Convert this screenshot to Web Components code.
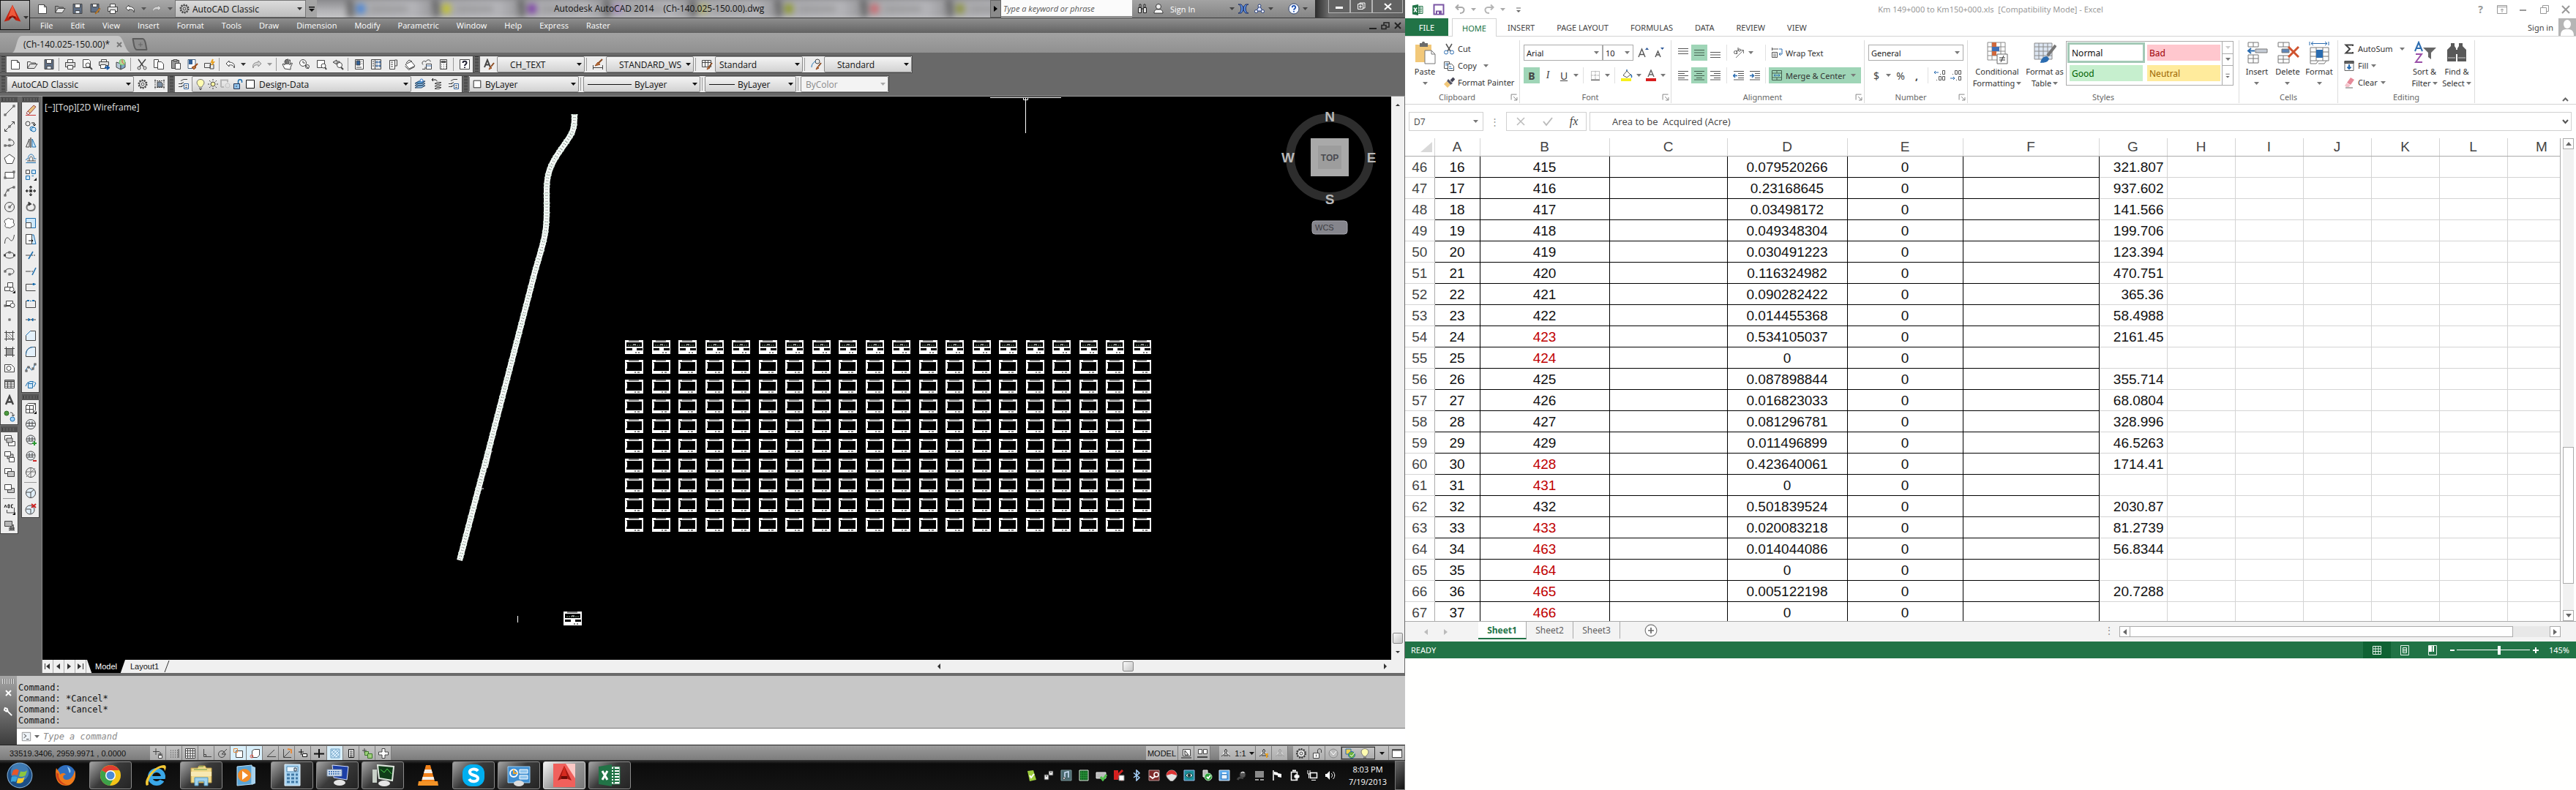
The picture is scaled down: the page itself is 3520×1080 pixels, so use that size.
<!DOCTYPE html>
<html lang="en">
<head>
<meta charset="utf-8">
<title>Workspace</title>
<style>
    html, body { height: 100%; }
    body {
        margin: 0;
        display: flex;
        overflow: hidden;
        background: #fffffe;
        font-family: "Open Sans", "Noto Sans", sans-serif;
        font-size: 11px;
    }
    cad-desktop { flex: 1920 1 0; min-width: 0; }
    excel-window { flex: 1600 1 0; min-width: 0; font-family: "Noto Sans", "Open Sans", sans-serif; }
</style>
</head>
<body>
<cad-desktop></cad-desktop>
<excel-window></excel-window>

<script>
// ---------------------------------------------------------------- icons
// 16x16 line icons, default stroke comes from the svg element
const B = 'stroke="#1d6fae"';
const BF = 'stroke="#1d6fae" fill="#cfe8fa"';
const DOT = (x, y) => `<rect x="${x - 1}" y="${y - 1}" width="2" height="2" fill="#fff"/>`;
const ICONS = {
    new: '<path d="M2.5 2.5h8l3 3v9h-11z" fill="#fff"/><path d="M10.500 2.500v3h3"/>',
    open: '<path d="M1.500 13V4.500h4l1 1.500h6v2"/><path d="M1.500 13.500l3.500-6h10l-4 6z" fill="#e3e3e3"/>',
    save: '<path d="M2 1.500h12v13H2z" fill="#5f6f86"/><path d="M4.500 1.500h7v5h-7z" fill="#fff"/><path d="M5 10.500h6v4H5z" fill="#dde5ee"/>',
    saveas: '<path d="M2 1.500h11v11H2z" fill="#5f6f86"/><path d="M4.500 1.500h6v4h-6z" fill="#fff"/><path d="M15 8l-5 6-2 1 1-2 5-6z" fill="#e9a13b" stroke="#a0621a"/>',
    print: '<path d="M4.500 5V1.500h7V5M2.500 11.500h-1v-6h13v6h-1" fill="#fff"/><path d="M1.500 5.500h13v6h-13z" fill="#ddd"/><path d="M4.500 9.500h7v5h-7z" fill="#fff"/>',
    preview: '<path d="M2.500 1.500h8l2 2v9h-10z" fill="#fff"/><circle cx="9" cy="9" r="3" fill="#fff"/><path d="M11 11l4 4" stroke-width="2"/>',
    publish: '<path d="M4.500 4V1.500h7V4"/><path d="M1.500 4.500h13v5h-13z" fill="#ddd"/><path d="M3.500 8.500h7v5h-7z" fill="#fff"/><path d="M9 12.500h5M12 10l3 2.500-3 2.500" stroke="#1558a8" stroke-width="2"/>',
    dwf: '<path d="M2 5l6 2v8l-6-3z" fill="#b7c9d8"/><path d="M8 7l6-2v7l-6 3z" fill="#7ea7c7"/><circle cx="10" cy="5" r="4" fill="#b8d693" stroke="#6c7"/><path d="M10 1v4l3 3" stroke="#d55"/>',
    cut: '<path d="M3 1l7 10M13 1L5 11" stroke-width="1.500"/><circle cx="4" cy="13" r="2"/><circle cx="12" cy="13" r="2"/>',
    copy: '<path d="M1.500 1.500h6v11h-6z" fill="#fff"/><path d="M6.500 4.500h5l3 3v7h-8z" fill="#fff"/>',
    paste: '<path d="M2.500 2.500h10v11h-10z" fill="#999"/><path d="M5 1.500h5v2H5z" fill="#ccc"/><path d="M7.500 6.500h7v8h-7z" fill="#fff"/>',
    match: '<path d="M2 1.500h10v12H2z" fill="#fff" stroke="#46607c"/><path d="M3 2h5v6H3z" fill="#2f5f98" stroke="none"/><path d="M15 7l-4 4" stroke="#9a4b1c" stroke-width="2"/><path d="M7 12l4-2 2 2-3 3z" fill="#b5713c" stroke="#9a4b1c"/>',
    blockedit: '<path d="M1.500 6.500h8v6h-8z"/><path d="M9 8h5v6H9z"/><path d="M13 1l-2 4h3l-3 4" stroke="#e8a020" stroke-width="2"/>',
    undo: '<path d="M6 3L2 7l4 4V9c4-1 7 1 7 4 2-5-2-8-7-8z" fill="#fff"/>',
    redo: '<path d="M10 3l4 4-4 4V9c-4-1-7 1-7 4C1 8 5 5 10 5z" stroke="#8d8d8d" fill="#d5d5d5"/>',
    pan: '<path d="M4 14L1 8l1-1 2 2V3h1.500v5V1.500H7V8l.5-7H9v7l1-6h1.500L11 9l2-3 1.500.5L12 12v3z" fill="#fff"/>',
    zoomrt: '<circle cx="6" cy="6" r="4.500" fill="#fff"/><path d="M6 3v3h3M9 9l5 5" /><circle cx="12" cy="11" r="2.500"/>',
    zoomwin: '<path d="M2.500 2.500h10v10h-10z" fill="#fff" /><circle cx="11" cy="10" r="3" fill="#fff"/><path d="M13 12l2 3" stroke-width="2"/>',
    zoomprev: '<path d="M6 2L1 5l5 3V6h4V4H6z" fill="#ccc"/><circle cx="10" cy="9" r="3.500" fill="#fff"/><path d="M12 12l3 3" stroke-width="2"/>',
    props: '<path d="M2.500 1.500h11v13h-11z" fill="#fff"/><path d="M4 3h5v6H4z" fill="#2f5f98"/><path d="M11 4h1M11 7h1M4 12h7"/>',
    dcenter: '<path d="M1.500 1.500h13v13h-13zM6.500 1.500v13"/><path d="M3 4h2M3 7h2M3 10h2"/><path d="M8 4h2v2H8zM12 4h2v2h-2zM8 9h2v2H8zM12 9h2v2h-2z" stroke="#2f5f98"/>',
    palettes: '<path d="M3.500 2.500h7v12h-7z" fill="#fff"/><path d="M10.500 2h3v8h-3M5 5h3M5 8h3M5 11h3"/>',
    sheetset: '<path d="M2 8l8-4 5 6-8 4z" fill="#fff"/><path d="M1.500 10.500l5 5 8-4M3 6l4-4 4 2" />',
    markup: '<path d="M3 8.500c-3-3 1-7 4-4 1-4 7-3 6 0"/><path d="M7.500 7.500h7v7h-7z" fill="#fff"/><path d="M7 10h8" stroke="#2f5f98"/><path d="M2 14.500h4v-3"/>',
    calc: '<path d="M3.500 1.500h9v13h-9z" fill="#fff"/><path d="M5 3.500h6v2H5z" fill="#777"/><path d="M5 8h1m2 0h1m2 0h1M5 10.500h1m2 0h1m2 0h1M5 13h1m2 0h1m2 0h1"/>',
    help: '<path d="M1.500 1.500h13v13h-13z" fill="#fff"/><path d="M5.500 6c0-3 5-3 5 0 0 2-2.500 2-2.500 4M8 11.500v1.500" stroke="#223" stroke-width="2"/>',
    gear: '<circle cx="8" cy="8" r="5.500" stroke-dasharray="2 1.400" stroke-width="2"/><circle cx="8" cy="8" r="4.500"/><circle cx="8" cy="8" r="2"/>',
    wssave: '<path d="M2 1.500v13M14 1.500v13M1 3.500h14M1 12.500h14" stroke-dasharray="2 1"/><path d="M5 5h5l2 2v5H5z" fill="#7d8fa3"/>',
    textstyle: '<path d="M2 12L6 2l4 10M3.500 8.500h5" stroke-width="2"/><path d="M15 6l-4 5" stroke="#8a4a20" stroke-width="2"/><path d="M8 15l2-4 2 2z" fill="#b5713c" stroke="#9a4b1c"/>',
    dimstyle: '<path d="M1.500 9v6M14.500 9v6M2 12.500h12"/><path d="M14 1L9 6" stroke="#8a4a20" stroke-width="2"/><path d="M4 10l4-5 3 3z" fill="#b5713c" stroke="#9a4b1c"/>',
    tablestyle: '<path d="M1.500 2.500h12v9h-12z" fill="#fff"/><path d="M1.500 5.500h12M5.500 3v8M9.500 3v8"/><path d="M15 6l-4 5" stroke="#8a4a20" stroke-width="2"/><path d="M8 15l2-4 2 2z" fill="#b5713c" stroke="#9a4b1c"/>',
    mleader: '<circle cx="10" cy="4" r="3"/><path d="M2 12c0-5 4-8 6-8" stroke="#1d6fae"/><path d="M15 6l-4 5" stroke="#8a4a20" stroke-width="2"/><path d="M8 15l2-4 2 2z" fill="#b5713c" stroke="#9a4b1c"/>',
    layers: '<path d="M4 3.500l4-2h5M4 7.500l4-2M4 11.500l4-2M1 7.500h5M1 11.500h5"/><path d="M8.500 7.500h6v7h-6z" fill="#fff" stroke="#2f5f98"/><path d="M10 10h3M10 12.500h3"/>',
    bulb: '<path d="M6 12c0-2-3-3-3-6 0-6 10-6 10 0 0 3-3 4-3 6z" fill="#fffbb0" stroke="#777"/><path d="M6 14h4M7 15.500h2"/>',
    sun: '<circle cx="8" cy="8" r="3" fill="#fff3a0"/><path d="M8 1v2M8 13v2M1 8h2M13 8h2M3 3l1.500 1.500M11.500 11.500L13 13M3 13l1.500-1.500M11.500 4.500L13 3"/>',
    vpfreeze: '<path d="M2 12V2.500h9v3M2 12h4" stroke="#b5b5b5" stroke-width="2"/><circle cx="11" cy="10" r="3" stroke="#c5c5c5"/>',
    lockopen: '<path d="M2.500 7.500h8v7h-8z" fill="#8fc1ea" stroke="#235"/><path d="M8.500 7V4c0-3 5-3 5 0v2" stroke="#1d6fae" stroke-width="1.500"/><path d="M6 10v2"/>',
    swatch: '<path d="M2.500 2.500h11v11h-11z" fill="#fff" stroke="#111"/>',
    layerset: '<path d="M1 13l5-3h9l-5 3zM1 10l5-3h9l-5 3z" fill="#9ecbf0" stroke="#246"/><path d="M1 7l5-3h9l-5 3z" fill="#5fa8e0" stroke="#246"/><circle cx="10" cy="3" r="2" fill="#fff" stroke="#37c"/>',
    layerprev: '<path d="M5 7.500l3-2h6l-3 2zM5 11l3-2h6l-3 2zM5 14.500l3-2h6l-3 2z" fill="#fff"/><path d="M1 2h4c2 0 3 1 3 2M3 0L1 2l2 2" stroke="#111"/>',
    // draw palette
    line: `<path d="M2 14L14 2"/>${DOT(2, 14)}${DOT(14, 2)}`,
    xline: `<path d="M1.500 14.500l13-13M11 1.500h3.500V5M1.500 11v3.500H5"/>${DOT(8, 8)}`,
    pline: `<path d="M2 12h8c6 0 5-7 0-8"/>${DOT(2, 12)}${DOT(8, 12)}${DOT(8, 4)}`,
    polygon: '<path d="M8 2l7 5-3 7.500H4L1 7z" fill="#fff"/>',
    rect: `<path d="M2 4.500h12v8H2z" fill="#fff"/>${DOT(2, 12)}${DOT(14, 4)}`,
    arc: `<path d="M2 14C3 8 7 4 14 3"/>${DOT(2, 14)}${DOT(6, 7)}${DOT(14, 3)}`,
    circle: `<circle cx="8" cy="8" r="6.500"/><path d="M8 8l4-4"/>${DOT(8, 8)}`,
    revcloud: '<path d="M4 3c2-3 5-1 5 0 3-2 6 1 4 4 3 3 1 6-2 6-1 2-4 2-5 1-4 1-5-3-3-5-3-2-2-6 1-6z" fill="#fff"/>',
    spline: '<path d="M1.500 14C2 4 6 5 8 8s5 4 6.500-6"/>',
    ellipse: `<ellipse cx="8" cy="8" rx="6.500" ry="4"/>${DOT(8, 4)}${DOT(1.5, 8)}${DOT(14.5, 8)}`,
    ellarc: `<path d="M2 8c1-5 12-5 12 0 0 3-3 4-6 4"/>${DOT(2, 8)}${DOT(8, 12)}`,
    insblock: '<path d="M5.500 1.500h7v6h-7z" fill="#fff"/><path d="M1.500 7.500h8v5h-8z" fill="#fff"/><circle cx="11" cy="10.500" r="3" fill="#fff"/><path d="M16 12v4h-4z" fill="#111" stroke="none"/>',
    mkblock: `<path d="M3.500 4.500h9v6h-9z" fill="#fff"/><circle cx="12" cy="10.500" r="3" fill="#fff"/><path d="M1 11.500h9"/>${DOT(2, 11)}`,
    point: DOT(8, 8),
    hatch: '<path d="M3.500 1v14M12.500 1v14M1 3.500h14M1 12.500h14"/><path d="M4 5l7 7M4 8l4 4M7 4l5 5" stroke="#888"/>',
    gradient: '<path d="M4 4h8v8H4z" fill="#999" stroke="none"/><path d="M3.500 1v14M12.500 1v14M1 3.500h14M1 12.500h14"/>',
    region: '<path d="M1.500 3.500h9l4 4v6h-13z" fill="#fff"/><circle cx="7" cy="8.500" r="3"/>',
    table: '<path d="M1.500 2.500h13v11h-13z" fill="#fff"/><path d="M1.500 4.500h13" stroke-width="2"/><path d="M1.500 8h13M1.500 11h13M5.500 4v9M10 4v9"/>',
    mtext: '<path d="M3 14L8 2.500 13 14M4.500 10.500h7" stroke-width="2.400"/>',
    addsel: '<circle cx="4" cy="4" r="3" fill="#4c9a3f" stroke="#2c6a22"/><circle cx="12" cy="12" r="3" fill="#9fd3ff" stroke="#1d6fae"/><path d="M9 3c3 0 4 1 4 4M11 6l2 2 2-2"/>',
    dofront: '<path d="M1.500 1.500h9v6h-9zM6.500 9.500h9v6h-9z" fill="#fff"/><path d="M4 5h8v6H4z" fill="#c4c4c4"/>',
    doback: '<path d="M5 5h8v6H5z" fill="#c4c4c4"/><path d="M1.500 1.500h8v6h-8zM7.500 9.500h7v6h-7z" fill="#fff"/>',
    doabove: '<path d="M1.500 2.500h9v7h-9z" fill="#fff"/><path d="M5.500 6.500h9v7h-9z" fill="#c4c4c4"/>',
    dounder: '<path d="M5.500 7.500h9v6h-9z" fill="#c4c4c4"/><path d="M1.500 2.500h9v7h-9z" fill="#fff"/>',
    abc: '<path d="M4.500 9v4h10V6"/><path d="M1 6l1.500-4L4 6M6 2v4h2V2zM13 2h-2.500v4H13" stroke="#111"/><path d="M16 12v4h-4z" fill="#111" stroke="none"/>',
    hatchback: '<path d="M1.500 2.500h10v7h-10z" fill="#b6b6b6"/><path d="M7 12h8M7 14.500h8M10 9v6M13 7v8" stroke-width="1.500"/>',
    // modify palette
    erase: '<path d="M1 14.500h14" stroke="#c33"/><path d="M4 9l8-8 3 2-8 9z" fill="#e8c37e" stroke="#944"/><path d="M4 9l3 3-2 1.500L2 12z" fill="#fff" stroke="#944"/>',
    copyobj: `<circle cx="4" cy="4" r="3"/><path d="M9 3h4v3M11 5l2 2 2-2" stroke="#111"/><circle cx="10" cy="11" r="3" ${BF}/><circle cx="12" cy="12" r="3" ${BF}/>`,
    mirror: `<path d="M6 3v11H1.500z"/><path d="M8 1v14" stroke="#111"/><path d="M10 3v11h5z" ${BF}/>`,
    offset: `<path d="M1.500 13.500H15M1.500 10c0-2 2-2 3-2 0-8 8-8 8 0h3" ${B}/><path d="M3 11h12M6 11c0-8 5-8 5 0"/>`,
    array: `<path d="M1.500 1.500h5v5h-5z"/><path d="M9.500 1.500h5v5h-5zM1.500 9.500h5v5h-5zM9.500 9.500H12" ${BF}/><path d="M16 12v4h-4z" fill="#111" stroke="none"/>`,
    move: '<path d="M8 1v4M8 11v4M1 8h4M11 8h4" stroke-width="1.500"/><path d="M6 3l2-2 2 2zM6 13l2 2 2-2zM3 6L1 8l2 2zM13 6l2 2-2 2zM6.500 6.500h3v3h-3z" fill="#333"/>',
    rotate: '<path d="M11 4c4 2 4 9-3 9S1 6 6 4" stroke="#777" stroke-width="2"/><path d="M5 1l4 3-4 2z" fill="#333"/>',
    scale: `<path d="M1.500 1.500h13v13h-13z" ${BF}/><path d="M1.500 7.500h7v7h-7z" fill="#fff"/>`,
    stretch: `<path d="M8 2h4l3 12.500H8z" ${BF}/><path d="M1.500 1.500h8v13h-8z" fill="#fff"/><path d="M5 10h6M9 8l2 2-2 2" stroke="#111"/>`,
    trim: `<path d="M5 13L11 3" ${B} stroke-width="1.500"/><path d="M1 8h6"/><path d="M9 8h6" stroke-dasharray="2 1"/>`,
    extend: `<path d="M10 13l5-10" ${B} stroke-width="1.500"/><path d="M1 8h5"/><path d="M6 8h6" stroke-dasharray="2 1"/>`,
    breakpt: `<path d="M10 3.500H1.500v9h13"/><path d="M10 3.500h5" ${B}/><path d="M11 2.500h2v2h-2z" ${B}/>`,
    break: `<path d="M4 4.500H1.500v9h13v-9H12"/><path d="M4 4.500h8" ${B} stroke-dasharray="2 1"/><path d="M3 3h3v2H3zM10 3h3v2h-3z" fill="#1d6fae" stroke="none"/>`,
    join: `<path d="M1 8h14"/><path d="M5 6l2 2-2 2zM11 6L9 8l2 2z" fill="#1d6fae" ${B}/>`,
    chamfer: `<path d="M1.500 14.500v-7l6-6h7v13z" fill="#e4f1fb"/><path d="M1.500 7.500l6-6" ${B}/>`,
    fillet: `<path d="M1.500 14.500v-3c0-6 4-10 10-10h3v13z" fill="#e4f1fb"/><path d="M1.500 11.500c0-6 4-10 10-10" ${B}/>`,
    blend: `<path d="M1.500 12c1-6 4-7 6-3s4 2 6-7" ${B}/>${DOT(2, 12)}${DOT(5, 7)}${DOT(11, 9)}${DOT(14, 3)}`,
    explode: `<path d="M4.500 7.500h6v6h-6zM4.500 7.500l2-3h5l-1 3M1 11l2-4 2-2M12 12l3-5-2-2" ${BF}/>`,
    box: '<path d="M1.500 4.500l3-3h10v9l-3 4h-10z" fill="#fff"/><path d="M1.500 4.500h10v10M11.500 4.500l3-3M6.500 4.500v10M1.500 9.500h10"/><path d="M16 12v4h-4z" fill="#111" stroke="none"/>',
    solid: '<circle cx="8" cy="8" r="6.500" fill="#e9eef2"/><path d="M2 6.500h12M3 10.500h10M6 4v6M10 4v6"/>',
    union: '<circle cx="8" cy="7" r="6" fill="#e9eef2"/><path d="M2 6h12M3 9h9M6 3v6M10 3v6"/><path d="M13 9v6M10 12h6" stroke="#2d9a34" stroke-width="2"/>',
    subtract: '<circle cx="8" cy="7" r="6" fill="#e9eef2"/><path d="M2 6h12M3 9h9M6 3v6M10 3v6"/><path d="M11 14h5" stroke="#c22" stroke-width="2"/>',
    inter: '<circle cx="8" cy="8" r="6.500"/><path d="M2 14L14 2M2 7h12M8 2v12" stroke="#777"/>',
    cubeview: '<circle cx="8" cy="8" r="6.500" fill="#e0eef8"/><path d="M8 14V7l5-4M8 7H2"/>',
    cubedel: '<circle cx="7" cy="9" r="6" fill="#e0eef8"/><path d="M8 14V8H2"/><path d="M9 1l6 5M15 1L9 6" stroke="#c22" stroke-width="2"/>',
    // status bar
    infer: '<path d="M5 1v9M1 5.500h9M8 9h6M11 6v8"/><path d="M8.500 10.500h5v4h-5z" fill="#fff"/>',
    snap: '<path d="M3 4h10M3 7h10M3 10h10M3 13h10" stroke-dasharray="1 2"/><path d="M14 2v12"/>',
    grid: '<path d="M1.500 1.500h13v13h-13z" fill="#fff"/><path d="M4.500 1v14M8 1v14M11.500 1v14M1 4.500h14M1 8h14M1 11.500h14"/>',
    ortho: '<path d="M4.500 2v10.500H15M4.500 9.500h3v3"/>',
    polar: '<circle cx="7" cy="9" r="4.500"/><path d="M7 9l7-7M7 9h6"/>',
    osnap: '<path d="M4.500 4.500h9v9h-9z" fill="#fff"/><path d="M1.500 1.500h5v5h-5z" stroke="#e58a3c"/>',
    osnap3: '<path d="M4.500 4.500l3-2h7v8l-3 3h-7z" fill="#fff"/><circle cx="4" cy="12" r="2" stroke="#e54"/>',
    otrack: '<path d="M13 3L3 12.500h12"/>',
    ducs: '<path d="M3.500 2v11.500H14M4 13l8-8"/><path d="M9 2l5 1v5" stroke="#e58a3c" stroke-width="2"/>',
    dyn: '<path d="M5.500 2v8M2 6h7" stroke="#111"/><path d="M7.500 8.500h6v4h-6z" fill="#fff" stroke="#111"/>',
    lwt: '<path d="M8 2v12M1 8.500h14" stroke="#111" stroke-width="2"/>',
    tpy: '<path d="M2 2h12v12H2z" fill="#d6ecfb" stroke="#6b9ec2"/><path d="M2 6l4-4M2 10l8-8M2 14L14 2M6 14l8-8M10 14l4-4M2 2l12 12M8 2l6 6M2 8l6 6" stroke="#8ab6d4"/>',
    qp: '<path d="M4.500 2.500h7v11h-7z" fill="#fff" stroke="#111"/><path d="M6 5h4M6 7.500h4M6 10h4M6 12h4" stroke="#111"/>',
    sc: '<path d="M4 1v6M1 4h6"/><path d="M4.500 5.500h5v5h-5z" fill="#9fcf7c" stroke="#3c7a26"/><path d="M8.500 8.500h6v6h-6z" fill="#9fcf7c" stroke="#3c7a26"/>',
    am: '<path d="M6 1.500h4V6h4.500v4H10v4.500H6V10H1.500V6H6z" fill="#fff"/>',
    modelsp: '<path d="M3.500 2.500h10v9h-10z" fill="#fff"/><path d="M6 4l5 6H6zM1 14h14" stroke="#222"/>',
    layoutsp: '<path d="M2.500 2.500h5v6h-5zM9.500 2.500h5v6h-5z" fill="#fff"/><path d="M1 13h14" stroke-width="2"/>',
    anno: '<path d="M8 2l1.500 2L9 8l5 4M8 2L6.500 4 7 8l-5 4M5 11h6" stroke="#333" fill="#fff"/>',
    annoauto: '<path d="M8 2l1.500 2L9 8l5 4M8 2L6.500 4 7 8l-5 4M5 11h6" stroke="#333" fill="#fff"/><path d="M12 8v6M10 9h4" stroke="#e8a020" stroke-width="2"/>',
    annogray: '<path d="M8 2l1.500 2L9 8l5 4M8 2L6.500 4 7 8l-5 4M5 11h6" stroke="#999" fill="#ddd"/>',
    geardark: '<circle cx="8" cy="8" r="6" stroke="#333" stroke-dasharray="2 1.400" stroke-width="2"/><circle cx="8" cy="8" r="5" fill="#ececec"/><circle cx="8" cy="8" r="2"/>',
    unlock: '<path d="M2.500 7.500h8v7h-8z" fill="#fff"/><path d="M8.500 7V4c0-3 5-3 5 0v3"/><path d="M6.500 9.500v3" />',
    perf: '<circle cx="8" cy="8" r="6" fill="#bbb" stroke="#888"/><path d="M4 5l4 5 4-5" stroke="#fff"/>',
    tray1: '<path d="M2 2h7v7H2z" fill="#f0d24a" stroke="#2468b0"/><circle cx="10" cy="10" r="4.500" fill="#6cb33f" stroke="#2468b0"/><path d="M8 10l2 2 4-5" stroke="#fff"/>',
    clean: '<path d="M1.500 2.500h13v11h-13z" fill="#fff"/><path d="M1.500 3.500h13" stroke="#555" stroke-width="2"/>',
    // header
    binoc: '<path d="M4 2h2v4H4zM10 2h2v4h-2zM2.500 6.500h4v7h-4zM9.500 6.500h4v7h-4zM6.500 8h3" fill="#ddd" stroke="#222"/>',
    user: '<circle cx="8" cy="5" r="3.500" fill="#eee" stroke="#333"/><path d="M2 14c0-4 3-5 4-5h4c1 0 4 1 4 5z" fill="#fff" stroke="#333"/>',
    exchange: '<path d="M1 2c5 0 5 12 0 12h4c4-4 4-8 0-12zM15 2c-5 0-5 12 0 12h-4c-4-4-4-8 0-12z" fill="#5d8fe0" stroke="#1d2f66"/>',
    a360: '<path d="M8 3l4 8H4z" stroke="#223a7a" fill="#dfe7ff"/><circle cx="8" cy="4" r="2" fill="#fff" stroke="#223a7a"/><circle cx="3.500" cy="11.500" r="2" fill="#fff" stroke="#223a7a"/><circle cx="12.500" cy="11.500" r="2" fill="#fff" stroke="#223a7a"/>',
    qmark: '<circle cx="8" cy="8" r="7" fill="#f2f6ff" stroke="#34466e"/><path d="M5.800 6.200c0-3 4.400-3 4.400 0 0 1.800-2.200 1.800-2.200 3.500M8 11v1.500" stroke="#1c4fae" stroke-width="1.800"/>',
    wrench: '<path d="M5 5l8 8M3 2l-1 3 3 2 2-1-1-3z" stroke="#fff" stroke-width="2"/>',
    prompt: '<path d="M1.500 1.500h13v13h-13z" fill="#eef3f8" stroke="#8a8a8a"/><path d="M4 4l4 3-4 3M8 12h4" stroke="#333"/>',
    // excel
    xl: '<path d="M7 3.500h8v10H7z" fill="#fff" stroke="#217346"/><path d="M8 6h6M8 8.500h6M8 11h6M11 4v9" stroke="#217346"/><path d="M1 2.500L9 1v15l-8-1.500z" fill="#217346" stroke="none"/><path d="M3 5.500l4 6M7 5.500l-4 6" stroke="#fff" stroke-width="1.500"/>',
    xlsave: '<path d="M1.500 1.500h13v13h-13z" fill="#fff" stroke="#7a55a3" stroke-width="2"/><path d="M4 9.500h8v5H4z" fill="#7a55a3" stroke="none"/><path d="M6 11h2v3H6z" fill="#fff" stroke="none"/>',
    xlundo: '<path d="M3 5h7c5 0 5 8-2 8M6 1.500L2.500 5 6 8.500" stroke="#a9a9a9" stroke-width="2"/>',
    xlredo: '<path d="M13 5H6c-5 0-5 8 2 8M10 1.500L13.500 5 10 8.500" stroke="#b5b5b5" stroke-width="2"/>',
    qat: '<path d="M5 6h6" stroke="#666"/><path d="M5 9h6l-3 3z" fill="#666" stroke="none"/>',
    xcut: '<path d="M4 1l6 10M12 1L6 11" stroke="#555" stroke-width="1.500"/><circle cx="4" cy="12.500" r="2.500" stroke="#2b6cb0"/><circle cx="12" cy="12.500" r="2.500" stroke="#2b6cb0"/>',
    xcopy: '<path d="M1.500 2.500h7v9h-7z" fill="#fff" stroke="#555"/><path d="M6.500 5.500h5l3 3v6h-8z" fill="#fff" stroke="#555"/><path d="M3 5h4M3 7h3M8 9h3M8 11.500h5" stroke="#2b6cb0"/>',
    xpaint: '<path d="M15 2l-4 4" stroke="#445" stroke-width="4"/><path d="M7 3l6 6-3 2-5-5z" fill="#556" stroke="none"/><path d="M5 6l5 5-4 4-5-5z" fill="#f2c879" stroke="none"/>',
    xborder: '<path d="M2.500 2.500h11v11h-11zM8 2v12M2 8h12" stroke="#888" stroke-dasharray="1 1"/><path d="M2 14.500h12" stroke="#555"/>',
    xfill: '<path d="M3 8l5-6 5 5-5 4z" fill="#fff" stroke="#555"/><path d="M8 2V0M13 7c2 1 2 3 1 4" stroke="#2b6cb0" stroke-width="1.500"/><path d="M0 12h14v4H0z" fill="#f7f01c" stroke="none"/>',
    xfontcol: '<path d="M4 10l4-9 4 9M5.500 7h5" stroke="#666" stroke-width="1.500"/><path d="M1 12h14v4H1z" fill="#d81e1e" stroke="none"/>',
    abig: '<path d="M2 14L6.500 3 11 14M3.500 10.500h6" stroke="#555" stroke-width="1.400"/><path d="M11 4l2.500-3L16 4z" fill="#2b5797" stroke="none"/>',
    asmall: '<path d="M3 14l3.500-8 3.500 8M4 11h5" stroke="#555" stroke-width="1.400"/><path d="M10 1l2.500 3L15 1z" fill="#2b5797" stroke="none"/>',
    atop: '<path d="M1 2.500h14M1 6h14M1 9.500h14" stroke="#555"/>',
    amid: '<path d="M1 4.500h14M1 8h14M1 11.500h14" stroke="#44604f"/>',
    abot: '<path d="M1 7.500h14M1 11h14M1 14.500h14" stroke="#555"/>',
    aleft: '<path d="M1 2.500h14M1 5.500h9M1 8.500h14M1 11.500h9M1 14h14" stroke="#555"/>',
    acenter: '<path d="M1 2.500h14M4 5.500h8M1 8.500h14M4 11.500h8M1 14h14" stroke="#44604f"/>',
    aright: '<path d="M1 2.500h14M6 5.500h9M1 8.500h14M6 11.500h9M1 14h14" stroke="#555"/>',
    orient: '<path d="M4 15L14 5M10 4.500h4.500V9" stroke="#777"/><circle cx="3.500" cy="7.500" r="2" stroke="#555"/><path d="M5.500 5v5M7 1v5" stroke="#555"/><circle cx="9" cy="4.500" r="1.500" stroke="#555"/>',
    outdent: '<path d="M7 5.500h8M7 8.500h8M7 11.500h8M1 2.500h14M1 14h14" stroke="#555"/><path d="M6 8.500H1M3 6L.500 8.500 3 11" stroke="#2b6cb0" stroke-width="1.500"/>',
    indent: '<path d="M8 5.500h7M8 8.500h7M8 11.500h7M1 2.500h14M1 14h14" stroke="#555"/><path d="M1 8.500h5M4 6l2.500 2.500L4 11" stroke="#2b6cb0" stroke-width="1.500"/>',
    wrap: '<path d="M1.500 1v4M1 3h9M1.500 7.500h7v7h-7zM3 10h4M3 12.500h4" stroke="#555"/><path d="M11 3h4v7h-4M13 8l-2 2 2 2" stroke="#2b6cb0"/>',
    merge: '<path d="M1.500 1.500h13v13h-13zM1.500 5h13M1.500 11h13M8 1.500V5M8 11v3.500" stroke="#44604f"/><path d="M4 8h8M5.500 6.500L4 8l1.500 1.500M10.500 6.500L12 8l-1.500 1.500" stroke="#2b6cb0"/>',
    xsum: '<path d="M13 4V2.500H3.500L9 8l-5.500 5.500H13V12" stroke="#444" stroke-width="2"/>',
    xfilldown: '<path d="M2 1.500h12v13H2z" fill="#fff" stroke="#666"/><path d="M2 1.500h12v3H2z" fill="#666"/><path d="M8 6v6M5.500 9.500L8 12l2.500-2.500" stroke="#2b6cb0" stroke-width="2"/>',
    xclear: '<path d="M5 8l5-7 5 3-5 7z" fill="#e58a99" stroke="none"/><path d="M4.500 8.500l5 3-2 2.500H4l-2-2z" fill="#f4c3cb" stroke="none"/><path d="M3 15h10" stroke="#666"/>',
    xclose: '<path d="M3 3l10 10M13 3L3 13" stroke="#bbb" stroke-width="1.500"/>',
    xcheck: '<path d="M2 8l4 5 8-10" stroke="#bbb" stroke-width="2"/>',
    ribopts: '<path d="M1.500 2.500h13v11h-13zM1.500 4.500h13" stroke="#999"/><path d="M8 12V7M6 9l2-2 2 2" stroke="#999"/>',
    xmin: '<path d="M3 9h9" stroke="#999" stroke-width="2"/>',
    xrest: '<path d="M2.500 5.500h8v8h-8zM5.500 5V2.500h8v8H11" stroke="#999"/>',
    xquit: '<path d="M3 3l10 10M13 3L3 13" stroke="#999" stroke-width="2"/>',
    vnormal: '<path d="M2.500 2.500h11v11h-11zM2 6h12M2 9.500h12M6 2v12M10 2v12" stroke="#e5f2ea"/>',
    vlayout: '<path d="M2.500 1.500h11v13h-11zM5.500 4.500h5v7h-5zM6 7h4M6 9h4" stroke="#e5f2ea"/>',
    vbreak: '<path d="M2.500 1.500h11v13h-11z" stroke="#e5f2ea"/><path d="M3 2h4v8H3zM8 2h2v8H8z" fill="#fff" stroke="none"/>',
    addsheet: '<circle cx="8" cy="8" r="7" stroke="#777" fill="#fff"/><path d="M8 4.500v7M4.500 8h7" stroke="#666" stroke-width="1.500"/>',
    launcher: '<path d="M3.500 12V3.500H12M7 7l5 5M12.500 8v4.500H8" stroke="#777"/>',
    // tray
    t1: '<path d="M3 2l8-1 4 13-9 2z" fill="#9ccc3c" stroke="none"/><path d="M6 8l2 3 4-5" stroke="#fff" stroke-width="2"/>',
    t2: '<path d="M2 7h6v7H2zM8 2h6v6H8z" fill="#eee" stroke="#333"/><path d="M4 9h2M10 4h2" stroke="#222"/>',
    t3: '<path d="M1 1h14v14H1z" fill="#4a6a70" stroke="#7d979b"/><path d="M6 12V4l5-1v8" stroke="#d5e6ff" stroke-width="1.500"/><circle cx="5" cy="12" r="1.500" fill="#fff"/>',
    t4: '<path d="M2 1h12v14H2z" fill="#0c5a1c" stroke="#dfeee0"/><path d="M5 2v12M8 2v12M11 2v12M3 5h10M3 8h10M3 11h10" stroke="#2d9a3d"/>',
    t5: '<path d="M1 4h13v8H1z" fill="#bbb" stroke="#e8e8e8"/><path d="M7 10l3 4 5-7" stroke="#4fc04a" stroke-width="3"/>',
    t6: '<path d="M1 1h6v13H1z" fill="#d5201f" stroke="none"/><path d="M13 1L6 8l7 7" stroke="#d5201f" stroke-width="3"/><path d="M8 8h7v7H8z" fill="#fff" stroke="#888"/>',
    t7: '<path d="M4 4.500l8 6.500-4 4V1l4 4-8 6" stroke="#a8d4ff" stroke-width="1.500"/>',
    t8: '<path d="M1 1h14v14H1z" fill="#7d2a2a" stroke="#b99"/><circle cx="11" cy="7" r="3" stroke="#fff" stroke-width="1.500"/><path d="M2 9l4 3 4-3" stroke="#fff" stroke-width="2"/>',
    t9: '<path d="M8 1c5 0 7 4 7 7s-5 8-7 8-7-5-7-8 2-7 7-7z" fill="#e3e3e3" stroke="#aaa"/><path d="M8 1c5 0 7 4 7 7l-7-2-7 2c0-3 2-7 7-7z" fill="#d33" stroke="none"/>',
    t10: '<path d="M1 1h14v14H1z" fill="#1b8f9a" stroke="#9be"/><path d="M3 8c3-4 7-4 10 0-3 4-7 4-10 0z" fill="#e6fbfd" stroke="#033"/><circle cx="8" cy="8" r="2" fill="#033"/>',
    t11: '<path d="M3 1h6v9H3z" fill="#bbb" stroke="#eee"/><circle cx="10" cy="10" r="5" fill="#2da03a" stroke="#bfe8c2"/><path d="M8 10l2 2 3-4" stroke="#fff" stroke-width="2"/>',
    t12: '<path d="M1 1h14v14H1z" fill="#5aa9ec" stroke="#dcebfa"/><path d="M4 7h8v6H4z" fill="#e8f4ff" stroke="#2a6fb5"/><path d="M5 4h6v2H5z" fill="#fff" stroke="none"/>',
    t13: '<circle cx="9" cy="7" r="4" fill="#555" stroke="#333"/><path d="M7 5c1-2 4-2 4 0" stroke="#ddd" stroke-width="1.500"/><path d="M2 14c2-4 6-3 8-2" stroke="#444" stroke-width="3"/>',
    t14: '<path d="M2 2h12v9H2z" fill="#8a8a8a" stroke="none"/><path d="M2 14h5M9 14h5" stroke="#999" stroke-width="2"/>',
    t15: '<path d="M3 1v14" stroke="#fff" stroke-width="1.500"/><path d="M4 3l5 1v1l5 1v5l-5-1V8L4 7z" fill="#fff" stroke="none"/>',
    t16: '<path d="M3.500 3.500h8v11h-8z" stroke="#fff" stroke-width="1.500"/><path d="M5 1.500h5" stroke="#fff" stroke-width="2"/><path d="M10 6v9M8 8h6v3H8z" fill="#fff" stroke="#fff"/>',
    t17: '<path d="M5.500 4.500h9v7h-9z" stroke="#fff" stroke-width="1.500"/><path d="M7 14.500h6M2 1v5h3V1M3.500 6v6" stroke="#fff"/>',
    t18: '<path d="M2 6h2l4-4v12l-4-4H2z" fill="#fff" stroke="none"/><path d="M10 5c2 2 2 4 0 6M12.500 3c3 3 3 7 0 10" stroke="#fff"/>'
};

// 32x32 pictures
const PICTURES = {
    orb: '<circle cx="16" cy="16" r="15" fill="#1d4f86" stroke="#7fa9cf"/><circle cx="16" cy="12" r="11" fill="#4f8fc7" opacity=".7"/><path d="M8 10c3-2 5-2 7 0l-2 6c-2-1-4-1-7 0z" fill="#e8562a"/><path d="M17 11c3 1 5 1 8-1l-2 6c-3 2-5 2-8 1z" fill="#8cc63f"/><path d="M6 18c3-1 5-1 7 0l-2 6c-2-1-4-1-6 0z" fill="#38a3dc"/><path d="M14 19c3 1 5 1 8-1l-2 6c-3 2-5 2-8 1z" fill="#fbc928"/>',
    firefox: '<circle cx="17" cy="15" r="13" fill="#2f6fc0"/><path d="M19 4c4 2 6 7 3 9" fill="#9cd0f5"/><path d="M4 6c-2 6-2 24 13 24 12 0 15-14 12-21-1 8-6 14-12 13-5-1-5-7 0-7-2-3-6-2-8 0 0-4-3-5-5-9z" fill="#ee7a1b"/><path d="M4 12c-1 10 6 18 15 17-8-2-13-9-12-15z" fill="#d0401a"/>',
    chrome: '<circle cx="16" cy="16" r="14" fill="#f3c318"/><path d="M16 16L4 9c5-9 19-9 24 0H16z" fill="#df3e30"/><path d="M16 16L4 9c-5 8 0 20 11 21l6-11z" fill="#3da14a"/><circle cx="16" cy="16" r="7" fill="#fff"/><circle cx="16" cy="16" r="5.500" fill="#4b8ad6"/>',
    ie: '<circle cx="17" cy="18" r="9" fill="none" stroke="#3aa7e8" stroke-width="6"/><path d="M8 19h19" stroke="#3aa7e8" stroke-width="4"/><path d="M20 21h9v4z" fill="#0a0a0a"/><path d="M3 30C-2 22 14 2 27 2c4 0 3 5 1 8 0-4-2-5-6-4C13 9 4 21 6 29z" fill="#f3c735"/>',
    explorer: '<path d="M2 6h9l2-3h8l2 3h7v20H2z" fill="#f1d98a" stroke="#b99a45"/><path d="M2 11h28v6H2z" fill="#f7e8b3"/><path d="M7 30V19h18v11h-5v-6h-8v6z" fill="#9fd2ee" stroke="#4e94bd"/><path d="M13 4h6M6 8h18" stroke="#6a9e4a"/>',
    wmp: '<path d="M3 4l20-2v26l-20 2z" fill="#5aa4d6" stroke="#bfe0f5"/><path d="M23 3l5 2v22l-5 2z" fill="#a9d2ec"/><circle cx="13" cy="16" r="9" fill="#f28c28"/><path d="M10 10l8 6-8 6z" fill="#fff"/>',
    calc: '<path d="M6 1h21v29H6z" fill="#a9d3ef" stroke="#e8f5ff"/><path d="M9 4h15v7H9z" fill="#e9f6ff" stroke="#4f88b2"/><path d="M9 15h4M15 15h4M21 15h3M9 20h4M15 20h4M21 20h3M9 25h4M15 25h4M21 25h3" stroke="#3f78a5" stroke-width="3"/><path d="M19 6h3v4h-3z" fill="none" stroke="#234"/>',
    osk: '<path d="M9 2l22 2-2 18-18-3z" fill="#1c3fa6" stroke="#dbe5ff"/><path d="M2 8h20v9H2z" fill="#dbe7f5" stroke="#7b8fa8"/><path d="M4 11h16M4 14h16" stroke="#4b79b5" stroke-width="2" stroke-dasharray="2 1"/><ellipse cx="19" cy="26" rx="8" ry="4" fill="#e6e6e6"/>',
    perfmon: '<path d="M9 2l22 2-2 19-18-3z" fill="#0f3d18" stroke="#dfe8df" stroke-width="2"/><path d="M13 8l5 4 4-5 6 7" fill="none" stroke="#4cd04f"/><path d="M2 8h6v18H2z" fill="#c8d0c8"/><ellipse cx="18" cy="27" rx="8" ry="4" fill="#e6e6e6"/>',
    vlc: '<path d="M13 2h6l6 22H7z" fill="#f08019"/><path d="M11.500 8h9l1.500 5H10zM8.500 18h15l1 4h-17z" fill="#f3efe9"/><path d="M3 24h26l1 6H2z" fill="#f39327"/>',
    skype: '<rect x="1" y="1" width="30" height="30" rx="12" fill="#00aff0"/><path d="M22 10c-3-4-12-3-11 2s11 3 11 8-9 6-12 1" fill="none" stroke="#fff" stroke-width="4"/>',
    control: '<path d="M1 4h30v22H1z" fill="#3f8fd2" stroke="#9fd0f4"/><circle cx="9" cy="13" r="5" fill="none" stroke="#fff" stroke-width="2"/><path d="M9 8v5h5" stroke="#f1a830" stroke-width="2" fill="none"/><path d="M17 8h11v5H17zM17 16h11v5H17z" fill="#8fc4ec" stroke="#fff"/><ellipse cx="16" cy="27" rx="7" ry="4" fill="#ddd"/>',
    acad: '<path d="M1 0h30v32H1z" fill="#f0605c"/><path d="M18 0h13v20z" fill="#fbc9c6"/><path d="M16 3L7 23l5-2 4-3 5 3 5 2z" fill="#a5150f"/><path d="M16 3l-4 14h8z" fill="#d62a1f"/><path d="M12 17h8v4h-8z" fill="#6e0c08"/>',
    excel: '<path d="M15 4h15v24H15z" fill="#fff" stroke="#217346"/><path d="M16 8h13M16 12h13M16 16h13M16 20h13M16 24h13M22 5v22" stroke="#217346" stroke-width="2"/><path d="M1 4l18-3v30L1 28z" fill="#217346"/><path d="M6 10l7 12M13 10L6 22" stroke="#fff" stroke-width="3"/>',
    logo: '<path d="M16 2L3 28l8-2 5-6 5 6 8 2z" fill="#c2200f"/><path d="M16 2L9 22l7-4 7 4z" fill="#ee5a3c"/><path d="M11 20h10v4l-5-3-5 3z" fill="#7a0f06"/>',
    bigpaste: '<path d="M3 5h22v24H3z" fill="#f2c879"/><path d="M9 3h3c0-3 4-3 4 0h4v5H9z" fill="#6b6b6b"/><path d="M16 13h9l5 5v13H16z" fill="#fff" stroke="#777"/><path d="M25 13v5h5" fill="none" stroke="#777"/>',
    cond: '<path d="M3 2h24v24H3z" fill="#fff" stroke="#8a8a8a"/><path d="M3 8h24M3 14h24M3 20h24M9 2v24M21 2v24" stroke="#8a8a8a"/><path d="M9 2h6v6H9zM9 14h6v6H9z" fill="#d0683c"/><path d="M9 8h10v6H9z" fill="#3f6fb5"/><path d="M16 18h14v13H16z" fill="#fff" stroke="#666"/><path d="M19 23h8M19 26h8M25 20l-4 9" stroke="#333"/>',
    fmttable: '<path d="M2 3h24v22H2z" fill="#dde6f2" stroke="#8a8a8a"/><path d="M2 8h24M2 14h24M2 20h24M8 3v22M14 3v22M20 3v22" stroke="#8a8a8a"/><path d="M31 6L20 20" stroke="#777" stroke-width="4"/><path d="M10 30c1-6 5-9 9-9l3 3c-1 5-6 6-12 6z" fill="#2b6cb0"/>',
    cinsert: '<path d="M4 2h14v6H4zM4 19h14v11H4zM11 2v6M11 19v11M4 24h14" fill="#fff" stroke="#777"/><path d="M14 11h16v5H14z" fill="#c5ccd6" stroke="#777"/><path d="M13 13.500H4M8 10l-4 3.500L8 17" stroke="#2b6cb0" stroke-width="2" fill="none"/>',
    cdelete: '<path d="M3 2h15v6H3zM3 20h15v10H3zM10 2v6M10 20v10M3 25h15" fill="#fff" stroke="#777"/><path d="M8 11h10v5H8z" fill="#5f86b8" stroke="#777"/><path d="M17 8l14 14M31 8L17 22" stroke="#d0532f" stroke-width="3"/>',
    cformat: '<path d="M3 1v5M29 1v5M5 3.500h22M8 1L5 3.500 8 6M24 1l3 2.500L24 6" fill="none" stroke="#2b6cb0"/><path d="M4 9h25v18H4z" fill="#fff" stroke="#777"/><path d="M4 15h25M4 21h25M12 9v18M21 9v18" stroke="#777"/><path d="M12 12h9v11h-9z" fill="#2b6cb0"/><path d="M4 27v4h8l3-4M15 31h8l3-4" fill="none" stroke="#777"/>',
    sort: '<path d="M3 14L8 2l5 12M5 10h6" fill="none" stroke="#2b6cb0" stroke-width="2"/><path d="M4 18h8L4 29h9" fill="none" stroke="#9a4fa8" stroke-width="2"/><path d="M14 9h18l-7 7v9l-4-3v-6z" fill="#666"/>',
    find: '<path d="M8 3h5v4l2 3v18H3V12l5-5zM19 3h5v4l5 5v16H17V10l2-3z" fill="#595959"/><path d="M14 12h4v6h-4z" fill="#595959"/><path d="M4 23h10M18 23h10" stroke="#ccc"/>'
};

const icon = (name, size = 16) =>
    `<svg class="i" width="${size}" height="${size}" viewBox="0 0 16 16" fill="none" stroke="#454545" aria-hidden="true">${ICONS[name]}</svg>`;
const picture = (name, size = 32) =>
    `<svg class="i" width="${size}" height="${size}" viewBox="0 0 32 32" aria-hidden="true">${PICTURES[name]}</svg>`;
const caret = (color = '#111') =>
    `<svg class="i caret" width="7" height="4" viewBox="0 0 7 4" aria-hidden="true"><path d="M0 0h7L3.500 4z" fill="${color}"/></svg>`;
const tool = (name, label = name) => `<button class="tool" aria-label="${label}">${icon(name)}</button>`;

const RESET = `
    * { box-sizing: border-box; }
    svg { display: block; flex: none; }
    button, select, input {
        font: inherit; color: inherit; margin: 0; padding: 0;
        border: 0; border-radius: 0; background: none; outline: 0;
    }
    button { display: flex; align-items: center; justify-content: center; white-space: pre; flex: none; }
    select { appearance: none; min-width: 0; flex: 1; text-overflow: clip; }
`;

class BaseElement extends HTMLElement {
    constructor() {
        super();
        this.attachShadow({ mode: 'open' });
    }

    connectedCallback() {
        this.shadowRoot.innerHTML = `<style>${RESET}${this.styles()}</style>${this.render()}`;
    }
}

// ---------------------------------------------------------------- CAD: controls
class CadCombo extends BaseElement {
    styles() {
        return `
            :host { display: flex; align-items: center; height: 22px; flex: none; gap: 1px; padding: 0 3px;
                border: 1px solid #8b8b8b; border-radius: 2px; background: linear-gradient(#f4f4f4, #d2d2d2);
                font-size: 12px; color: #111; }
            :host([disabled]) { background: #f3f3f3; color: #8a8a8a; }
            select { opacity: 1; height: 20px; padding-left: var(--indent, 3px); }
        `;
    }
    render() {
        const off = this.hasAttribute('disabled');
        return `<slot></slot>
            <select aria-label="${this.getAttribute('label')}" ${off ? 'disabled' : ''}><option>${this.getAttribute('value')}</option></select>
            ${caret(off ? '#aaa' : '#111')}`;
    }
}
customElements.define('cad-combo', CadCombo);

class CadToolbar extends BaseElement {
    styles() {
        return `
            :host { display: flex; align-items: center; height: 24px; background: #ededed; border: 1px solid #4c4c4c; border-left: 0; flex: none; }
            .grip { width: 9px; align-self: stretch; border: 1px solid #555; flex: none;
                background: repeating-linear-gradient(#333 0 1px, #777 1px 2px); border-width: 0 2px; border-color: #666; }
        `;
    }
    render() {
        return '<span class="grip"></span><slot></slot>';
    }
}
customElements.define('cad-toolbar', CadToolbar);

// ---------------------------------------------------------------- CAD: title and menu
class CadHeader extends BaseElement {
    styles() {
        return `
            :host { display: grid; grid-template: 25px 20px / 41px 1fr; background: #6f6f6f; }
            .app { grid-row: 1 / 3; height: 41px; gap: 1px; border: 1px solid #111; background: linear-gradient(#b5b5b5, #7c7c7c); align-self: start; padding-top: 4px; align-items: flex-start; }
            .app .caret { margin-top: 17px; }
            .title { display: flex; min-width: 0; border-bottom: 1px solid #3b3b3b; box-shadow: inset 0 -1px #d8d8d8; }
            .qat { display: flex; align-items: center; padding-left: 5px; width: 198px; background: linear-gradient(#a8a8a8, #8a8a8a); flex: none; }
            .qat .tool { width: 24px; }
            .qat .dot { width: 12px; color: #444; }
            .ws { display: flex; align-items: center; width: 179px; gap: 3px; padding: 0 4px; font-size: 12px; color: #111;
                background: linear-gradient(#dcdcdc, #bdbdbd); border: 1px solid #777; flex: none; }
            .more { width: 15px; flex-direction: column; gap: 1px; background: #a5a5a5; }
            .glass { position: relative; flex: 1; display: flex; overflow: hidden; min-width: 0; padding-left: 42px; background: linear-gradient(#8b8b8e, #b3b3b6 60%, #c4c4c6); }
            .ghost { width: 117px; flex: none; display: flex; align-items: center; gap: 8px; padding-left: 12px; filter: blur(4px);
                background: linear-gradient(90deg, #444, #a9a9ac 12px, #b4b4b8 90px, #98989b); }
            .ghost i { width: 12px; height: 14px; border-radius: 6px; background: var(--c); }
            .ghost b { width: 50px; height: 7px; background: #9b9b9d; }
            .caption { position: absolute; left: 324px; top: 3px; display: flex; gap: 13px; font-size: 12px; line-height: 17px; color: #111; white-space: pre; }
            .find { width: 15px; background: #8b8b8b; border: 1px solid #666; }
            input { width: 179px; padding: 0 3px; height: 22px; background: #fbfbfb; font-style: italic; color: #555; }
            input::placeholder { color: #555; opacity: 1; }
            .net { display: flex; align-items: center; width: 250px; padding-left: 3px; background: linear-gradient(#a3a3a3, #858585); color: #fff; flex: none; }
            .net .tool { width: 22px; }
            .net .in { margin: 0 46px 0 5px; }
            .net .dot { width: 9px; color: #333; }
            .win { display: flex; width: 123px; padding: 0 3px 5px 18px; background: linear-gradient(90deg, #2c2c2c, #707070 20px, #5f5f5f); flex: none; }
            .win button { width: 30px; height: 18px; border: 1px solid #b5b5b5; border-top: 0; background: #636363; }
            .win button:last-child { flex: 1; }
            nav { display: flex; align-items: center; gap: 24px; padding-left: 14px; color: #fff; background: linear-gradient(#8f8f8f, #636363); }
            nav a { color: #fff; text-decoration: none; line-height: 18px; }
            .mdi { display: flex; margin-left: auto; padding-right: 2px; }
            .mdi button { width: 17px; }
        `;
    }
    render() {
        const menus = ['File', 'Edit', 'View', 'Insert', 'Format', 'Tools', 'Draw', 'Dimension', 'Modify', 'Parametric', 'Window', 'Help', 'Express', 'Raster'];
        const ghosts = ['#4a86d8', '#c3c32a', '#7d3fa8', '#a98fc4', '#b2b26a', '#8e9a2c', '#cc6a70', '#8d9440'];
        return `
            <button class="app" aria-label="Application menu">${picture('logo', 28)}${caret('#333')}</button>
            <div class="title">
                <div class="qat">
                    ${['new', 'open', 'save', 'saveas', 'print', 'undo'].map(n => tool(n)).join('')}
                    <button class="dot" aria-label="Undo list">${caret('#555')}</button>${tool('redo')}<button class="dot" aria-label="Redo list">${caret('#555')}</button>
                </div>
                <label class="ws">${icon('gear')}<select aria-label="Workspace"><option>AutoCAD Classic</option></select>${caret('#333')}</label>
                <button class="more" aria-label="Customize"><svg width="8" height="7" viewBox="0 0 8 7"><path d="M0 0h8v1.500H0zM0 3h8L4 7z" fill="#111"/></svg></button>
                <div class="glass">
                    ${ghosts.map(c => `<span class="ghost" style="--c:${c}"><i></i><b></b></span>`).join('')}
                    <div class="caption"><span>Autodesk AutoCAD 2014</span><span>(Ch-140.025-150.00).dwg</span></div>
                </div>
                <button class="find" aria-label="Search options"><svg width="5" height="8" viewBox="0 0 5 8"><path d="M0 0l5 4-5 4z"/></svg></button>
                <input type="search" aria-label="Search" placeholder="Type a keyword or phrase">
                <div class="net">
                    ${tool('binoc')}${tool('user')}<button class="in">Sign In</button>
                    <button class="dot" aria-label="Account">${caret('#444')}</button>${tool('exchange')}${tool('a360')}
                    <button class="dot" aria-label="Apps">${caret('#444')}</button><span style="width:16px"></span>${tool('qmark')}
                    <button class="dot" aria-label="Help list">${caret('#444')}</button>
                </div>
                <div class="win">
                    <button aria-label="Minimize"><svg width="12" height="9" viewBox="0 0 12 9"><path d="M1 5h10v3H1z" fill="#fff"/></svg></button>
                    <button aria-label="Restore"><svg width="12" height="11" viewBox="0 0 12 11"><path d="M1.500 2.500h7v7h-7zM4 2V1h7v7H9M4 5h2v2H4z" fill="none" stroke="#fff"/></svg></button>
                    <button aria-label="Close"><svg width="11" height="10" viewBox="0 0 11 10"><path d="M1 1l9 8M10 1L1 9" stroke="#fff" stroke-width="2"/></svg></button>
                </div>
            </div>
            <nav>
                ${menus.map(m => `<a href="#">${m}</a>`).join('')}
                <div class="mdi">
                    <button aria-label="Minimize drawing"><svg width="12" height="11" viewBox="0 0 12 11"><path d="M1 8h10v2H1z" fill="#222"/></svg></button>
                    <button aria-label="Restore drawing"><svg width="12" height="11" viewBox="0 0 12 11"><path d="M1 4.500h6v5H1zM4 4V1h7v6H8" fill="none" stroke="#222" stroke-width="1.500"/></svg></button>
                    <button aria-label="Close drawing"><svg width="10" height="10" viewBox="0 0 10 10"><path d="M1 1l8 8M9 1L1 9" stroke="#222" stroke-width="2"/></svg></button>
                </div>
            </nav>`;
    }
}
customElements.define('cad-header', CadHeader);

class CadFileTabs extends BaseElement {
    styles() {
        return `
            :host { display: flex; align-items: flex-end; height: 27px; padding-left: 17px; background: linear-gradient(#a3a3a3, #909090); }
            .tab { position: relative; display: flex; align-items: center; gap: 9px; height: 23px; width: 163px; padding-left: 15px; font-size: 12px; color: #111; z-index: 0; justify-content: flex-start; }
            .tab .shape { position: absolute; inset: 0; z-index: -1; }
            .add { margin: 0 0 3px; }
        `;
    }
    render() {
        return `
            <button class="tab"><svg class="shape" width="163" height="23" viewBox="0 0 163 23"><path d="M0 23C6 20 5 0 13 0h131c8 0 9 20 17 23z" fill="#c5c5c5"/></svg><span>(Ch-140.025-150.00)*</span><svg width="8" height="8" viewBox="0 0 8 8"><path d="M1 1l6 6M7 1L1 7" stroke="#777" stroke-width="2"/></svg></button>
            <button class="add" aria-label="New drawing"><svg width="22" height="17" viewBox="0 0 22 17"><path d="M1 1h14c5 0 4 14 6 15H7C2 16 3 2 1 1z" fill="#8c8c8c" stroke="#5c5c5c" stroke-width="2"/><path d="M12 6v6M9 9h6" stroke="#666"/></svg></button>`;
    }
}
customElements.define('cad-file-tabs', CadFileTabs);

class CadToolbars extends BaseElement {
    styles() {
        return `
            :host { display: flex; flex-direction: column; gap: 3px; height: 60px; padding-top: 4px; background: #696969; border-bottom: 1px solid #9a9a9a; }
            .row { display: flex; }
            .tool { width: 23px; height: 22px; }
            .sep { width: 1px; height: 18px; margin: 0 3px 0 2px; background: #9a9a9a; flex: none; }
            .dd { width: 13px; height: 22px; }
            .style { width: 120px; --indent: 14px; }
            .line { height: 1px; background: #111; flex: none; margin-left: 2px; }
        `;
    }
    render() {
        const set = names => names.map(n => tool(n)).join('');
        const sep = '<span class="sep"></span>';
        return `
            <div class="row">
                <cad-toolbar>
                    ${set(['new', 'open', 'save'])}${sep}${set(['print', 'preview', 'publish', 'dwf'])}${sep}
                    ${set(['cut', 'copy', 'paste', 'match', 'blockedit'])}${sep}
                    ${tool('undo')}<button class="dd" aria-label="Undo list">${caret('#333')}</button>${tool('redo')}<button class="dd" aria-label="Redo list">${caret('#999')}</button>${sep}
                    ${set(['pan', 'zoomrt', 'zoomwin', 'zoomprev'])}${sep}
                    ${set(['props', 'dcenter', 'palettes', 'sheetset', 'markup', 'calc'])}${sep}${tool('help')}
                </cad-toolbar>
                <cad-toolbar>
                    ${tool('textstyle')}<cad-combo class="style" label="Text style" value="CH_TEXT"></cad-combo>${sep}
                    ${tool('dimstyle')}<cad-combo class="style" label="Dimension style" value="STANDARD_WS"></cad-combo>${sep}
                    ${tool('tablestyle')}<cad-combo class="style" style="--indent:2px" label="Table style" value="Standard"></cad-combo>${sep}
                    ${tool('mleader')}<cad-combo class="style" label="Leader style" value="Standard"></cad-combo>
                </cad-toolbar>
            </div>
            <div class="row">
                <cad-toolbar>
                    <cad-combo style="width:174px" label="Workspace" value="AutoCAD Classic"></cad-combo>
                    ${set(['gear', 'wssave'])}
                </cad-toolbar>
                <cad-toolbar>
                    ${tool('layers')}
                    <cad-combo style="width:300px" label="Layer" value="Design-Data">${['bulb', 'sun', 'vpfreeze', 'lockopen', 'swatch'].map(n => icon(n)).join('')}</cad-combo>
                    ${set(['layerset', 'layerprev', 'layers'])}
                </cad-toolbar>
                <cad-toolbar>
                    <cad-combo style="width:150px" label="Colour" value="ByLayer">${icon('swatch', 14)}</cad-combo>${sep}
                    <cad-combo style="width:160px" label="Linetype" value="ByLayer"><span class="line" style="width:60px"></span></cad-combo>${sep}
                    <cad-combo style="width:125px" label="Lineweight" value="ByLayer"><span class="line" style="width:35px"></span></cad-combo>${sep}
                    <cad-combo style="width:120px" disabled label="Plot style" value="ByColor"></cad-combo>
                </cad-toolbar>
            </div>`;
    }
}
customElements.define('cad-toolbars', CadToolbars);

class CadPalettes extends BaseElement {
    styles() {
        return `
            :host { display: flex; gap: 4px; width: 58px; background: #696969; align-items: flex-start; flex: none; border-right: 1px solid #8c8c8c; }
            .grip { height: 8px; margin: 0 1px; background: repeating-linear-gradient(90deg, #333 0 1px, #777 1px 2px); border: 2px solid #555; }
            .set { width: 25px; margin-bottom: 2px; background: #ededed; border: 1px solid #444; border-top: 0; }
            .tool { width: 23px; height: 22px; }
            hr { height: 1px; margin: 2px 3px 3px; border: 0; background: #999; }
        `;
    }
    render() {
        const set = names => `<div class="grip"></div><div class="set">${names.map(n => n ? tool(n) : '<hr>').join('')}</div>`;
        return `
            <div>
                ${set(['line', 'xline', 'pline', 'polygon', 'rect', 'arc', 'circle', 'revcloud', 'spline', 'ellipse', 'ellarc', 'insblock', 'mkblock', 'point', 'hatch', 'gradient', 'region', 'table', 'mtext', 'addsel'])}
                ${set(['dofront', 'doback', 'doabove', 'dounder', '', 'abc', 'hatchback'])}
            </div>
            <div>
                ${set(['erase', 'copyobj', 'mirror', 'offset', 'array', 'move', 'rotate', 'scale', 'stretch', 'trim', 'extend', 'breakpt', 'break', 'join', 'chamfer', 'fillet', 'blend', 'explode'])}
                ${set(['box', 'solid', 'union', 'subtract', 'inter', '', 'cubeview', 'cubedel'])}
            </div>`;
    }
}
customElements.define('cad-palettes', CadPalettes);

// Model space: alignment strip, the sheet frames, view cube and crosshair
class CadCanvas extends BaseElement {
    styles() {
        return `
            :host { display: block; background: #000; min-height: 0; min-width: 0; overflow: hidden; }
            svg { width: 100%; height: 100%; }
            text { font-family: "Liberation Sans", Arial, sans-serif; }
            .view { font-family: "Open Sans", sans-serif; font-size: 12px; fill: #e6e6e6; }
            .dir { font-size: 19px; font-weight: bold; fill: #b9b9b9; text-anchor: middle; }
        `;
    }
    sheets() {
        let out = '';
        for (let row = 0; row < 10; row++) {
            for (let col = 0; col < 20; col++) {
                const id = row === 0 ? 'plan' : 'sheet';
                out += `<use href="#${id}" x="${855 + Math.round(col * 36.5)}" y="${465 + row * 27}"/>`;
            }
        }
        return out;
    }
    render() {
        const road = 'M786 156C786 172 785 178 780 186C774 196 764 208 757 221C749 236 748 248 748 262C748 285 749 300 746 318C744 334 734 362 730 379L668 618L629 766';
        return `
            <svg viewBox="59 132 1842 770" preserveAspectRatio="xMinYMin meet">
                <defs>
                    <g id="sheet">
                        <path d="M0 0h25v19H0z" fill="#fff"/><path d="M2 3h21v12H2z" fill="#000"/>
                        <path d="M5 1h14M13 17h2M17 17h3" stroke="#000"/><path d="M1 12v3M24 12v3M2 4v8" stroke="#fff" stroke-width="2"/>
                    </g>
                    <g id="plan">
                        <path d="M0 0h25v19H0z" fill="#fff"/><path d="M2 3h21v6H2zM2 11h8v3H2zM16 11h8v3h-8z" fill="#000"/>
                        <path d="M5 1h14M14 17h2M18 17h2" stroke="#000"/><path d="M4 7h17" stroke="#7f9c80" stroke-dasharray="2 1"/>
                        <path d="M11 6h4" stroke="#fff"/>
                    </g>
                </defs>
                <text class="view" x="62" y="151">[−][Top][2D Wireframe]</text>
                <g fill="none">
                    <path d="${road}" stroke="#f4faf6" stroke-width="8"/>
                    <path d="${road}" stroke="#dcebe2" stroke-width="9" stroke-dasharray="2 3 1 7"/>
                    <path d="${road}" stroke="#5a625d" stroke-width="3" stroke-dasharray="1 3"/>
                    <path d="${road}" stroke="#fff" stroke-width="1"/>
                    <path d="M666 617h8M652 668h10M738 337h8M672 618l-5 22" stroke="#fff"/>
                </g>
                ${this.sheets()}
                <use href="#plan" x="771" y="836"/>
                <path d="M708.500 842v9" stroke="#fff"/>
                <path d="M1354 133.500h97M1402.500 133v49M1399.500 133.500h6v3h-6z" stroke="#fff" fill="none"/>
                <circle cx="1818" cy="215" r="54" fill="none" stroke="#2d2d2d" stroke-width="12"/>
                <text class="dir" x="1818" y="166">N</text><text class="dir" x="1818" y="279">S</text>
                <text class="dir" x="1761" y="222">W</text><text class="dir" x="1875" y="222">E</text>
                <path d="M1792 189h52v52h-52z" fill="#a9a9a9"/><path d="M1802 199h32v32h-32z" fill="#9d9d9d"/>
                <text x="1818" y="220" font-size="12" font-weight="bold" fill="#4a4a50" text-anchor="middle">TOP</text>
                <rect x="1794" y="302" width="48" height="18" rx="4" fill="#85858c" stroke="#a5a5ad"/>
                <text x="1798" y="315" font-size="11" fill="#3c3c42">WCS</text>
            </svg>`;
    }
}
customElements.define('cad-canvas', CadCanvas);

class CadWorkspace extends BaseElement {
    styles() {
        return `
            :host { display: flex; min-height: 0; background: #696969; }
            .area { flex: 1; min-width: 0; display: grid; grid-template: 1fr 18px / 1fr 18px; padding-right: 1px; }
            .vs { display: flex; flex-direction: column; align-items: center; justify-content: space-between; padding: 8px 0 7px; background: #f0f0f0; }
            .vs .thumb { width: 14px; height: 15px; margin-top: auto; margin-bottom: 7px; }
            .thumb { border: 1px solid #888; border-radius: 2px; background: linear-gradient(135deg, #fafafa, #c5c5c5); }
            .bottom { grid-column: 1 / 3; display: flex; align-items: stretch; background: #f0f0f0; }
            .nav button { width: 15px; border-right: 1px solid #aaa; }
            .nav { display: flex; width: 61px; }
            .model { width: 52px; color: #fff; background: #000; clip-path: polygon(0 0, 100% 0, 88% 100%, 12% 100%); }
            .sheet { width: 53px; color: #111; }
            .slash { align-self: center; }
            .tabs { font-family: "Liberation Sans", Arial, sans-serif; display: flex; flex: 1216 1 0; }
            .hs { flex: 624 1 0; display: flex; align-items: center; padding: 0 22px 0 16px; }
            .hs .thumb { width: 15px; height: 14px; margin: 0 340px 0 auto; }
        `;
    }
    render() {
        const arrow = d => `<svg width="8" height="8" viewBox="0 0 8 8" aria-hidden="true"><path d="${d}" fill="#333"/></svg>`;
        return `
            <cad-palettes></cad-palettes>
            <div class="area">
                <cad-canvas></cad-canvas>
                <div class="vs">${arrow('M1 5l3-3 3 3z')}<span class="thumb"></span>${arrow('M1 3h6L4 6z')}</div>
                <div class="bottom">
                    <div class="tabs">
                        <div class="nav">
                            <button aria-label="First">${arrow('M0 0h1v8H0zM7 0L2 4l5 4z')}</button><button aria-label="Previous">${arrow('M6 0L1 4l5 4z')}</button>
                            <button aria-label="Next">${arrow('M1 0l5 4-5 4z')}</button><button aria-label="Last">${arrow('M0 0l5 4-5 4zM7 0h1v8H7z')}</button>
                        </div>
                        <button class="model">Model</button><button class="sheet">Layout1</button>
                        <svg class="slash" width="8" height="16" viewBox="0 0 8 16"><path d="M7 0L1 16" stroke="#333"/></svg>
                    </div>
                    <div class="hs">${arrow('M6 0L2 4l4 4z')}<span class="thumb"></span>${arrow('M2 0l4 4-4 4z')}</div>
                </div>
            </div>`;
    }
}
customElements.define('cad-workspace', CadWorkspace);

class CadCommand extends BaseElement {
    styles() {
        return `
            :host { display: grid; grid-template: 71px 23px / 23px 1fr; border-top: 4px solid #6a6a6a; background: #c7c7c7; }
            .side { grid-row: 1 / 3; display: flex; flex-direction: column; align-items: center; gap: 14px; padding-top: 4px; background: linear-gradient(#a5a5a5, #3c3c3c); }
            .dots { width: 17px; height: 7px; background: repeating-linear-gradient(90deg, #ddd 0 1px, #8d8d8d 1px 3px); margin-bottom: -6px; }
            pre, input { font-family: "DejaVu Sans Mono", "Liberation Mono", monospace; }
            pre { margin: 0; padding: 9px 2px 0; font-size: 12px; line-height: 15px; color: #111; }
            .line { display: flex; align-items: center; gap: 4px; padding-left: 6px; background: #fff; border-top: 1px solid #777; }
            input { flex: 1; font-size: 12px; font-style: italic; padding-left: 1px; }
            input::placeholder { color: #8a8a8a; opacity: 1; }
        `;
    }
    render() {
        return `
            <div class="side">
                <span class="dots"></span>
                <button aria-label="Close"><svg width="9" height="9" viewBox="0 0 9 9"><path d="M1 1l7 7M8 1L1 8" stroke="#fff" stroke-width="2"/></svg></button>
                <button aria-label="Options">${icon('wrench', 15)}</button>
            </div>
            <pre>Command:
Command: *Cancel*
Command: *Cancel*
Command:</pre>
            <div class="line">${icon('prompt', 14)}${caret('#666')}<input aria-label="Command" placeholder="Type a command"></div>`;
    }
}
customElements.define('cad-command', CadCommand);

class CadStatus extends BaseElement {
    styles() {
        return `
            :host { display: flex; align-items: stretch; padding-top: 1px; border-bottom: 1px solid #333; background: linear-gradient(#9b9b9b, #7c7c7c);
                font-family: "Liberation Sans", Arial, sans-serif; color: #111; border-top: 1px solid #222; }
            .coords { width: 205px; padding-left: 13px; line-height: 20px; }
            .set { display: flex; }
            .set button, .set .ins { width: 22px; background: linear-gradient(#c4c4c4, #adadad); border: 1px solid #7b7b7b; border-width: 0 1px 0 0; }
            .set button.on { background: #d9effa; }
            .end { margin-left: auto; }
            .set button.wide { width: 44px; gap: 3px; }
            .set button.scale { width: 50px; gap: 4px; padding: 0 3px; }
            .set .ins { display: flex; width: 46px; gap: 4px; align-items: center; padding: 0 3px; border: 1px solid #333; margin: 1px 0; }
            .set button.thin { width: 19px; }
            .gap { width: 12px; }
            .gap.s { width: 7px; }
        `;
    }
    render() {
        const modes = ['infer', 'snap', 'grid', 'ortho', 'polar', 'osnap', 'osnap3', 'otrack', 'ducs', 'dyn', 'lwt', 'tpy', 'qp', 'sc', 'am'];
        const on = ['osnap', 'osnap3', 'tpy'];
        return `
            <span class="coords">33519.3406, 2959.9971 , 0.0000</span>
            <div class="set">${modes.map(m => `<button class="${on.includes(m) ? 'on' : ''}" aria-label="${m}">${icon(m)}</button>`).join('')}</div>
            <div class="set end">
                <button class="wide">MODEL</button>${tool('modelsp')}${tool('layoutsp')}<span class="gap"></span>
                <button class="scale">${icon('anno')}1:1${caret()}</button>${tool('annoauto')}${tool('annogray')}<span class="gap s"></span>
                ${tool('geardark')}${tool('unlock')}${tool('perf')}
                <span class="ins">${icon('tray1')}${icon('bulb')}</span>
                <button class="thin" aria-label="Status menu">${caret()}</button>${tool('clean')}
            </div>`;
    }
}
customElements.define('cad-status', CadStatus);

class WinTaskbar extends BaseElement {
    styles() {
        return `
            :host { display: flex; align-items: stretch; background: linear-gradient(#2e2e2e, #0c0c0c 4px, #141414); color: #fff; }
            .apps { display: flex; gap: 4px; padding: 1px 0 1px; }
            .apps button { width: 58px; }
            .apps button:first-child { width: 56px; padding-right: 2px; }
            .apps .run { border: 1px solid #8a8a8a; border-radius: 3px; background: linear-gradient(135deg, #a5a5a5, #3a3a3a 45%, #242424); }
            .apps .now { border: 1px solid #ddd; border-radius: 3px; background: linear-gradient(135deg, #f4f4f4, #9a9a9a 50%, #777); }
            .tray { display: flex; align-items: center; margin-left: auto; }
            .tray button { width: 24px; height: 39px; }
            .clock { width: 74px; margin-left: 3px; display: flex; flex-direction: column; align-items: center; justify-content: center; line-height: 17px; }
            .peek { width: 14px; border: 1px solid #777; background: linear-gradient(135deg, #666, #111); }
        `;
    }
    render() {
        const apps = [['orb', ''], ['firefox', ''], ['chrome', 'run'], ['ie', ''], ['explorer', 'run'], ['wmp', ''], ['calc', 'run'], ['osk', 'run'],
            ['perfmon', 'run'], ['vlc', ''], ['skype', 'run'], ['control', 'run'], ['acad', 'now'], ['excel', 'run']];
        let tray = '';
        for (let i = 1; i <= 18; i++) tray += tool('t' + i);
        return `
            <div class="apps">${apps.map(([n, c]) => `<button class="${c}" aria-label="${n}">${picture(n, n === 'orb' ? 36 : 32)}</button>`).join('')}</div>
            <div class="tray">${tray}</div>
            <div class="clock"><span>8:03 PM</span><span>7/19/2013</span></div>
            <button class="peek" aria-label="Show desktop"></button>`;
    }
}
customElements.define('win-taskbar', WinTaskbar);

class CadDesktop extends BaseElement {
    styles() {
        return ':host { display: grid; height: 100%; grid-template: 45px 27px 60px 1fr 98px 22px 40px / 100%; }';
    }
    render() {
        return `<cad-header></cad-header><cad-file-tabs></cad-file-tabs><cad-toolbars></cad-toolbars>
            <cad-workspace></cad-workspace><cad-command></cad-command><cad-status></cad-status><win-taskbar></win-taskbar>`;
    }
}
customElements.define('cad-desktop', CadDesktop);

// ---------------------------------------------------------------- Excel
class XlHeader extends BaseElement {
    styles() {
        return `
            :host { display: block; background: #fff; }
            .title { display: grid; grid-template-columns: 1fr auto 1fr; align-items: center; height: 25px; color: #999; }
            .qat { display: flex; align-items: center; padding-left: 9px; }
            .qat .tool { width: 29px; justify-content: flex-start; }
            .qat .dd { width: 12px; margin-left: -9px; margin-right: 8px; }
            .title > span { white-space: pre; }
            .win { display: flex; justify-content: flex-end; font-weight: bold; font-size: 14px; }
            .win button { width: 29px; }
            .tabs { display: flex; align-items: stretch; height: 25px; border-bottom: 1px solid #d4d4d4; color: #444; }
            .tabs a { display: flex; align-items: center; padding: 0 15px; color: #444; text-decoration: none; }
            .tabs .file { width: 59px; padding: 0; justify-content: center; color: #fff; background: #217346; margin-right: 5px; }
            .tabs .home { width: 61px; padding: 0; justify-content: center; color: #217346; border: 1px solid #d4d4d4; border-bottom: 0; background: #fff; margin-bottom: -1px; }
            .tabs .sign { margin-left: auto; padding: 0 7px; }
            .face { background: #b5b5b5; }
        `;
    }
    render() {
        return `
            <div class="title">
                <div class="qat">${tool('xl')}${tool('xlsave')}${tool('xlundo')}<button class="dd" aria-label="Undo list">${caret('#aaa')}</button>${tool('xlredo')}<button class="dd" aria-label="Redo list">${caret('#aaa')}</button>${tool('qat')}</div>
                <span>Km 149+000 to Km150+000.xls  [Compatibility Mode] - Excel</span>
                <div class="win"><button>?</button>${['ribopts', 'xmin', 'xrest', 'xquit'].map(n => tool(n)).join('')}</div>
            </div>
            <div class="tabs">
                <a class="file" href="#">FILE</a><a class="home" href="#">HOME</a>
                ${['INSERT', 'PAGE LAYOUT', 'FORMULAS', 'DATA', 'REVIEW', 'VIEW'].map(t => `<a href="#">${t}</a>`).join('')}
                <a class="sign" href="#">Sign in</a>
                <svg class="face" width="24" height="24" viewBox="0 0 24 24"><ellipse cx="12" cy="8" rx="5" ry="6" fill="#fff"/><path d="M3 24c0-8 4-9 9-9s9 1 9 9z" fill="#fff"/></svg>
            </div>`;
    }
}
customElements.define('xl-header', XlHeader);

class XlGroup extends BaseElement {
    styles() {
        return `
            :host { display: flex; flex-direction: column; height: 86px; flex: none; border-right: 1px solid #dcdcdc; }
            .body { flex: 1; min-height: 0; }
            .foot { display: flex; align-items: center; height: 17px; color: #666; }
            .foot span { flex: 1; text-align: center; }
        `;
    }
    render() {
        const launch = this.hasAttribute('launcher') ? `<button aria-label="${this.getAttribute('label')} options">${icon('launcher', 14)}</button>` : '';
        return `<div class="body"><slot></slot></div><div class="foot"><span>${this.getAttribute('label')}</span>${launch}</div>`;
    }
}
customElements.define('xl-group', XlGroup);

class XlRibbon extends BaseElement {
    styles() {
        return `
            :host { display: flex; height: 93px; padding-top: 5px; background: #fff; border-bottom: 1px solid #d4d4d4; color: #444; }
            .tool { width: 22px; height: 22px; }
            .on { background: #9fd5b7; }
            .dd { width: 11px; height: 22px; }
            .sep { width: 1px; height: 22px; margin: 0 5px 0 4px; background: #e1e1e1; flex: none; }
            .col { display: flex; flex-direction: column; }
            .rows { display: flex; flex-direction: column; gap: 9px; padding: 6px 5px 0; }
            .row { display: flex; height: 22px; }
            .box { display: flex; align-items: center; height: 22px; padding: 0 4px 0 3px; border: 1px solid #ababab; color: #222; }
            .big { flex-direction: column; justify-content: flex-start; text-align: center; line-height: 16px; gap: 2px; height: 70px; padding-top: 1px; color: #333; }
            .big > span { display: flex; flex-direction: column; align-items: center; }
            .big em { display: flex; align-items: center; gap: 2px; height: 16px; font-style: normal; }
            .item { height: 23px; gap: 4px; justify-content: flex-start; color: #333; }
            .flexrow { display: flex; }
            .txt { justify-content: flex-start; padding-left: 3px; gap: 4px; height: 22px; color: #333; }
            .glyph { font-size: 14px; width: 22px; color: #444; }
            .gallery { display: grid; grid-template-columns: 1fr 1fr 15px; border: 1px solid #ababab; width: 229px; height: 61px; margin-top: 1px; }
            .cards { grid-column: 1 / 3; display: grid; grid-template-columns: 100px 100px; grid-auto-rows: 22px; gap: 6px; padding: 4px; }
            .cards button { justify-content: flex-start; padding-left: 3px; font-size: 12px; }
            .scroll { display: grid; border-left: 1px solid #ababab; }
            .scroll button + button { border-top: 1px solid #ababab; }
            .fold { margin: auto 10px 3px auto; }
        `;
    }
    render() {
        const dd = `<button class="dd" aria-label="More">${caret('#777')}</button>`;
        const sep = '<span class="sep"></span>';
        const c = caret('#777');
        const big = (pic, a, b, w) => `<button class="big" style="width:${w}px">${picture(pic)}<span><em>${a}</em><em>${b}${c}</em></span></button>`;
        const on = n => `<button class="tool on" aria-label="${n}">${icon(n)}</button>`;
        return `
            <xl-group label="Clipboard" launcher style="width:157px">
                <div class="flexrow">
                    <button class="big" style="width:52px;padding-left:2px">${picture('bigpaste')}<span><em>Paste</em><em>${c}</em></span></button>
                    <div class="col">
                        <button class="item">${icon('xcut')}Cut</button>
                        <button class="item">${icon('xcopy')}Copy  ${c}</button>
                        <button class="item">${icon('xpaint')}Format Painter</button>
                    </div>
                </div>
            </xl-group>
            <xl-group label="Font" launcher style="width:207px">
                <div class="rows">
                    <div class="row">
                        <label class="box" style="width:111px"><select aria-label="Font"><option>Arial</option></select>${c}</label>
                        <label class="box" style="width:43px;margin-right:2px"><select aria-label="Font size"><option>10</option></select>${c}</label>
                        ${tool('abig')}${tool('asmall')}
                    </div>
                    <div class="row">
                        <button class="glyph on"><b>B</b></button><button class="glyph" style="font-family:'Liberation Serif',serif"><i>I</i></button><button class="glyph"><u>U</u></button>${dd}${sep}
                        ${tool('xborder')}${dd}${sep}${tool('xfill')}${dd}${tool('xfontcol')}${dd}
                    </div>
                </div>
            </xl-group>
            <xl-group label="Alignment" launcher style="width:264px">
                <div class="rows">
                    <div class="row">${tool('atop')}${on('amid')}${tool('abot')}${sep}${tool('orient')}${dd}<span style="width:11px"></span><span class="sep" style="margin:0 4px 0 3px"></span>
                        <button class="txt">${icon('wrap')}Wrap Text</button></div>
                    <div class="row">${tool('aleft')}${on('acenter')}${tool('aright')}${sep}${tool('outdent')}${tool('indent')}<span class="sep" style="margin:0 4px 0 3px"></span>
                        <button class="txt on" style="width:126px">${icon('merge')}Merge &amp; Center ${c}</button></div>
                </div>
            </xl-group>
            <xl-group label="Number" launcher style="width:141px">
                <div class="rows">
                    <div class="row"><label class="box" style="width:130px"><select aria-label="Number format"><option>General</option></select>${c}</label></div>
                    <div class="row">
                        <button class="glyph">$</button>${dd}<button class="glyph">%</button><button class="glyph"><b>,</b></button>${sep}
                        <button class="tool" aria-label="Increase decimal"><svg width="18" height="16" viewBox="0 0 18 16"><path d="M1 4h6M3 2L1 4l2 2" stroke="#2b6cb0" fill="none"/><path d="M9.500 6v1M12.500 1.500h3v5h-3zM4.500 14v1M7.500 9.500h3v5h-3zM12.500 9.500h3v5h-3z" stroke="#555" fill="none"/></svg></button>
                        <button class="tool" aria-label="Decrease decimal"><svg width="18" height="16" viewBox="0 0 18 16"><path d="M1 12h6M5 10l2 2-2 2" stroke="#2b6cb0" fill="none"/><path d="M4.500 6v1M7.500 1.500h3v5h-3zM12.500 1.500h3v5h-3zM9.500 14v1M12.500 9.500h3v5h-3z" stroke="#555" fill="none"/></svg></button>
                    </div>
                </div>
            </xl-group>
            <xl-group label="Styles" style="width:371px">
                <div class="flexrow" style="padding-left:4px">
                    ${big('cond', 'Conditional', 'Formatting', 72)}${big('fmttable', 'Format as', 'Table', 58)}
                    <div class="gallery">
                        <div class="cards">
                            <button style="outline:3px solid #a3c9b6;color:#111">Normal</button><button style="background:#ffc7ce;color:#9c0006">Bad</button>
                            <button style="background:#c6efce;color:#006100">Good</button><button style="background:#ffeb9c;color:#9c6500">Neutral</button>
                        </div>
                        <div class="scroll"><button aria-label="Up">${caret('#ccc')}</button><button aria-label="Down">${c}</button><button aria-label="More styles">${icon('qat', 14)}</button></div>
                    </div>
                </div>
            </xl-group>
            <xl-group label="Cells" style="width:135px">
                <div class="flexrow" style="padding-left:3px">${big('cinsert', 'Insert', '', 42)}${big('cdelete', 'Delete', '', 42)}${big('cformat', 'Format', '', 44)}</div>
            </xl-group>
            <xl-group label="Editing" style="width:187px">
                <div class="flexrow" style="padding-left:7px">
                    <div class="col" style="width:89px">
                        <button class="item">${icon('xsum')}AutoSum  ${c}</button>
                        <button class="item">${icon('xfilldown')}Fill${c}</button>
                        <button class="item">${icon('xclear')}Clear${c}</button>
                    </div>
                    ${big('sort', 'Sort &amp;', 'Filter', 44)}${big('find', 'Find &amp;', 'Select', 44)}
                </div>
            </xl-group>
            <button class="fold" aria-label="Collapse ribbon"><svg width="9" height="6" viewBox="0 0 9 6"><path d="M1 5l3.500-3.500L8 5" stroke="#666" stroke-width="2" fill="none"/></svg></button>`;
    }
}
customElements.define('xl-ribbon', XlRibbon);

class XlFormula extends BaseElement {
    styles() {
        return `
            :host { display: flex; align-items: center; gap: 4px; height: 46px; padding: 0 6px 0 5px; background: #fff; color: #444;
                font-family: "Open Sans", sans-serif; font-size: 13px; }
            .cell { display: flex; align-items: center; height: 26px; border: 1px solid #d0d0d0; }
            .name { width: 102px; padding: 0 6px; font-size: 12px; }
            .name input { flex: 1; min-width: 0; }
            .dots { width: 23px; text-align: center; color: #999; }
            .fx { width: 110px; justify-content: space-around; }
            .fx b { font: italic 16px "Liberation Serif", serif; color: #444; }
            .value { flex: 1; padding-right: 3px; }
            .value input { flex: 1; padding-left: 30px; }
        `;
    }
    render() {
        return `
            <div class="cell name"><input aria-label="Name box" value="D7">${caret('#777')}</div>
            <span class="dots">⋮</span>
            <div class="cell fx">${tool('xclose')}${tool('xcheck')}<button aria-label="Insert function"><b>fx</b></button></div>
            <div class="cell value"><input aria-label="Formula" value="Area to be  Acquired (Acre)"><svg width="9" height="7" viewBox="0 0 9 7"><path d="M1 1l3.500 4L8 1" stroke="#555" stroke-width="2" fill="none"/></svg></div>`;
    }
}
customElements.define('xl-formula', XlFormula);

// row number, A, B, D, E, G; a leading "!" on B marks red ink
const ROWS = [
    [46, 16, '415', '0.079520266', 0, '321.807'], [47, 17, '416', '0.23168645', 0, '937.602'],
    [48, 18, '417', '0.03498172', 0, '141.566'], [49, 19, '418', '0.049348304', 0, '199.706'],
    [50, 20, '419', '0.030491223', 0, '123.394'], [51, 21, '420', '0.116324982', 0, '470.751'],
    [52, 22, '421', '0.090282422', 0, '365.36'], [53, 23, '422', '0.014455368', 0, '58.4988'],
    [54, 24, '!423', '0.534105037', 0, '2161.45'], [55, 25, '!424', '0', 0, ''],
    [56, 26, '425', '0.087898844', 0, '355.714'], [57, 27, '426', '0.016823033', 0, '68.0804'],
    [58, 28, '427', '0.081296781', 0, '328.996'], [59, 29, '429', '0.011496899', 0, '46.5263'],
    [60, 30, '!428', '0.423640061', 0, '1714.41'], [61, 31, '!431', '0', 0, ''],
    [62, 32, '432', '0.501839524', 0, '2030.87'], [63, 33, '!433', '0.020083218', 0, '81.2739'],
    [64, 34, '!463', '0.014044086', 0, '56.8344'], [65, 35, '!464', '0', 0, ''],
    [66, 36, '!465', '0.005122198', 0, '20.7288'], [67, 37, '!466', '0', 0, '']
];

class XlSheet extends BaseElement {
    styles() {
        return `
            :host { display: flex; min-height: 0; overflow: hidden; background: #fff; border-bottom: 1px solid #ababab; }
            .clip { flex: 1; min-width: 0; overflow: hidden; border-right: 1px solid #ababab; }
            table { width: 1600px; table-layout: fixed; border-collapse: collapse; font: 19px "Liberation Sans", Arial, sans-serif; color: #111; }
            th, td { height: 29px; padding: 2px 4px 0; text-align: center; font-weight: normal; line-height: 26px; border: 1px solid #d4d4d4; }
            thead th { height: 24px; padding-top: 1px; line-height: 22px; color: #444; border-top: 0; border-bottom: 1px solid #ababab; }
            thead th:first-child { border: 0; border-bottom: 1px solid #ababab; padding: 0; }
            th[scope=row] { color: #444; border-left: 0; border-right: 1px solid #ababab; padding: 2px 0 0; }
            .k { border: 1px solid #000; }
            tbody tr:first-child .k { border-top: 1px solid #ababab; }
            .k1 { border-left: 1px solid #ababab; }
            .red { color: #c00000; }
            .num { text-align: right; }
            .corner { margin: 0 3px 0 auto; }
            .vs { display: flex; flex-direction: column; width: 21px; padding: 0 3px 0 3px; background: #fff; }
            .vs button { height: 15px; border: 1px solid #ababab; background: #fff; }
            .vs .track { flex: 1; display: flex; flex-direction: column; background: #f1f1f1; }
            .vs .track i { margin-top: auto; height: 187px; margin-bottom: 36px; border: 1px solid #ababab; background: #fff; }
        `;
    }
    render() {
        const widths = [40, 62, 177, 161, 164, 158, 186, 93, 93, 93, 93, 93, 93, 94];
        const blank = '<td></td>'.repeat(6);
        const rows = ROWS.map(([n, a, b, d, e, g]) => `
            <tr><th scope="row">${n}</th><td class="k k1">${a}</td><td class="k${b[0] === '!' ? ' red' : ''}">${b.replace('!', '')}</td>
            <td class="k"></td><td class="k">${d}</td><td class="k">${e}</td><td class="k"></td><td class="num">${g}</td>${blank}</tr>`).join('');
        return `
            <div class="clip">
                <table>
                    <colgroup>${widths.map(w => `<col style="width:${w}px">`).join('')}</colgroup>
                    <thead><tr><th><svg class="corner" width="16" height="14" viewBox="0 0 16 14"><path d="M16 0v14H0z" fill="#d9d9d9"/></svg></th>${[...'ABCDEFGHIJKLM'].map(l => `<th scope="col">${l}</th>`).join('')}</tr></thead>
                    <tbody>${rows}</tbody>
                </table>
            </div>
            <div class="vs">
                <button aria-label="Scroll up"><svg width="8" height="5" viewBox="0 0 8 5"><path d="M0 5h8L4 0z" fill="#666"/></svg></button>
                <div class="track"><i></i></div>
                <button aria-label="Scroll down"><svg width="8" height="5" viewBox="0 0 8 5"><path d="M0 0h8L4 5z" fill="#666"/></svg></button>
            </div>`;
    }
}
customElements.define('xl-sheet', XlSheet);

class XlFooter extends BaseElement {
    styles() {
        return `
            :host { display: block; }
            .tabs { display: flex; align-items: stretch; height: 27px; background: #f3f3f3; color: #555; font-family: "Open Sans", sans-serif; font-size: 12px; }
            .arrows { display: flex; width: 100px; align-items: center; gap: 22px; padding-left: 26px; }
            .tabs > button { width: 64px; height: 23px; border-right: 1px solid #ababab; }
            .tabs > .cur { width: 66px; height: 24px; background: #fff; border-bottom: 2px solid #217346; color: #217346; font-weight: bold; }
            .tabs > .plus { margin-left: 32px; width: 20px; border: 0; }
            .dots { margin-left: auto; line-height: 24px; color: #888; width: 20px; }
            .hs { display: flex; width: 603px; height: 15px; margin: 6px 21px 0 0; background: #e8e8e8; }
            .hs button, .hs i { width: 15px; border: 1px solid #ababab; background: #fff; }
            .hs i { width: 524px; margin: 0 auto 0 -1px; }
            .status { display: flex; align-items: center; height: 23px; padding: 0 9px 0 8px; color: #fff; background: #217346; font-size: 11px; }
            .status .tool { width: 38px; height: 23px; }
            .status .tool:first-of-type { margin-left: auto; background: #0f6233; }
            .zoom { width: 12px; }
            input { appearance: none; width: 100px; height: 12px; background: linear-gradient(#fff, #fff) center / 100% 1px no-repeat; }
            input::-webkit-slider-thumb { appearance: none; width: 4px; height: 12px; background: #fff; }
            output { width: 38px; text-align: right; }
        `;
    }
    render() {
        return `
            <div class="tabs">
                <div class="arrows"><svg width="5" height="8" viewBox="0 0 5 8"><path d="M5 0v8L0 4z" fill="#bbb"/></svg><svg width="5" height="8" viewBox="0 0 5 8"><path d="M0 0v8l5-4z" fill="#bbb"/></svg></div>
                <button class="cur">Sheet1</button><button>Sheet2</button><button>Sheet3</button><button class="plus" aria-label="New sheet">${icon('addsheet', 18)}</button>
                <span class="dots">⋮</span>
                <div class="hs"><button aria-label="Scroll left"><svg width="5" height="8" viewBox="0 0 5 8"><path d="M5 0v8L0 4z" fill="#666"/></svg></button><i></i><button aria-label="Scroll right"><svg width="5" height="8" viewBox="0 0 5 8"><path d="M0 0v8l5-4z" fill="#666"/></svg></button></div>
            </div>
            <div class="status">
                READY
                ${tool('vnormal')}${tool('vlayout')}${tool('vbreak')}
                <button class="zoom" style="margin-left:2px" aria-label="Zoom out"><svg width="8" height="8" viewBox="0 0 8 8"><path d="M1 3h6v2H1z" fill="#fff"/></svg></button>
                <input type="range" aria-label="Zoom" min="0" max="100" value="58">
                <button class="zoom" style="width:16px" aria-label="Zoom in"><svg width="8" height="8" viewBox="0 0 8 8"><path d="M0 3h8v2H0zM3 0h2v8H3z" fill="#fff"/></svg></button>
                <output>145%</output>
            </div>`;
    }
}
customElements.define('xl-footer', XlFooter);

class ExcelWindow extends BaseElement {
    styles() {
        return ':host { display: grid; height: 100vh; max-height: 900px; grid-template: 50px 93px 46px 1fr 50px / 100%; background: #fff; }';
    }
    render() {
        return '<xl-header></xl-header><xl-ribbon></xl-ribbon><xl-formula></xl-formula><xl-sheet></xl-sheet><xl-footer></xl-footer>';
    }
}
customElements.define('excel-window', ExcelWindow);
</script>
</body>
</html>
